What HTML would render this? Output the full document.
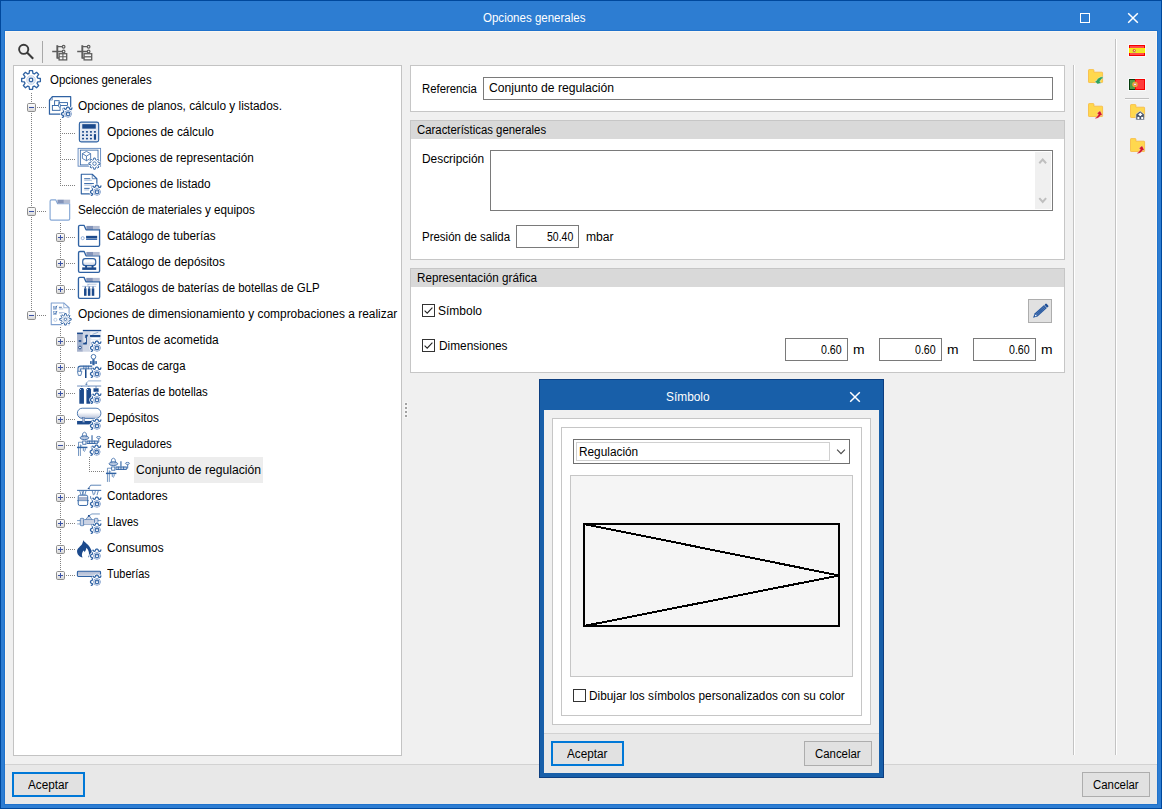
<!DOCTYPE html>
<html><head><meta charset="utf-8"><title>Opciones generales</title>
<style>
html,body{margin:0;padding:0}
body{width:1162px;height:809px;overflow:hidden;position:relative;background:#f0f0f0;font-family:"Liberation Sans",sans-serif;}
.t{position:absolute;white-space:nowrap;line-height:14px;height:14px;transform-origin:0 0;display:inline-block;font-family:"Liberation Sans",sans-serif;}
svg{overflow:visible}
</style></head>
<body>
<div class="" style="position:absolute;left:0px;top:0px;width:1162px;height:809px;background:#2d7dd2"></div>
<div class="" style="position:absolute;left:0px;top:0px;width:1162px;height:1px;background:#00489c"></div>
<div class="" style="position:absolute;left:0px;top:0px;width:1px;height:809px;background:#00489c"></div>
<div class="" style="position:absolute;left:1161px;top:0px;width:1px;height:809px;background:#00489c"></div>
<div class="" style="position:absolute;left:0px;top:808px;width:1162px;height:1px;background:#00489c"></div>
<div class="" style="position:absolute;left:4px;top:30px;width:1154px;height:775px;background:#1f72cc"></div>
<div class="" style="position:absolute;left:5px;top:31px;width:1152px;height:773px;background:#f0f0f0"></div>
<div class="" style="position:absolute;left:5px;top:31px;width:1152px;height:1px;background:#fbf7f1"></div>
<div class="" style="position:absolute;left:5px;top:31px;width:1px;height:773px;background:#fbf7f1"></div>
<div class="" style="position:absolute;left:1156px;top:31px;width:1px;height:773px;background:#fbf7f1"></div>
<div class="" style="position:absolute;left:5px;top:764px;width:1152px;height:40px;background:#e8e8e8"></div>
<div class="" style="position:absolute;left:5px;top:764px;width:1152px;height:1px;background:#d2d2d2"></div>
<span class="t " id="t1" style="left:482.52px;top:11px;color:#fff;font-size:12px;transform:scaleX(0.9603)">Opciones generales</span>
<div class="" style="position:absolute;left:1080px;top:13px;width:10px;height:10px;border:1px solid #fff;box-sizing:border-box"></div>
<svg style="position:absolute;left:1127px;top:12px" width="12" height="12" viewBox="0 0 12 12"><path d="M1.2 1.2 L10.8 10.8 M10.8 1.2 L1.2 10.8" stroke="#fff" stroke-width="1.5" fill="none"/></svg>
<svg style="position:absolute;left:16px;top:42px" width="20" height="20" viewBox="0 0 20 20"><circle cx="7.7" cy="7.3" r="4.6" fill="none" stroke="#3a3a3a" stroke-width="1.9"/><path d="M11 10.6 L17.2 16.8" stroke="#3a3a3a" stroke-width="2.1"/></svg>
<div class="" style="position:absolute;left:42px;top:41px;width:1px;height:22px;background:#a8a8a8"></div>
<svg style="position:absolute;left:51px;top:44px" width="17" height="17" viewBox="0 0 17 17"><path d="M6.3 1.2 V14.6" stroke="#5d5d5d" stroke-width="1.9"/><path d="M1.2 7.5 H6.3" stroke="#5d5d5d" stroke-width="1.5"/><path d="M6.3 2.6 H11.6 M6.3 7.5 H11.6 M6.3 14 H8.6" stroke="#5d5d5d" stroke-width="1.3"/><circle cx="12.6" cy="2.7" r="1.35" fill="#f0f0f0" stroke="#5d5d5d" stroke-width="1.2"/><circle cx="12.6" cy="7.5" r="1.35" fill="#f0f0f0" stroke="#5d5d5d" stroke-width="1.2"/><rect x="8.1" y="9.7" width="7.6" height="6.2" fill="#f6f6f6" stroke="#5d5d5d" stroke-width="1.3"/><path d="M11.9 9.7 V15.9 M8.1 12.8 H15.7" stroke="#5d5d5d" stroke-width="1.1"/></svg>
<svg style="position:absolute;left:76px;top:44px" width="17" height="17" viewBox="0 0 17 17"><path d="M6.3 1.2 V14.6" stroke="#5d5d5d" stroke-width="1.9"/><path d="M1.2 7.5 H6.3" stroke="#5d5d5d" stroke-width="1.5"/><path d="M6.3 2.6 H11.6 M6.3 7.5 H11.6 M6.3 14 H8.6" stroke="#5d5d5d" stroke-width="1.3"/><circle cx="12.6" cy="2.7" r="1.35" fill="#f0f0f0" stroke="#5d5d5d" stroke-width="1.2"/><circle cx="12.6" cy="7.5" r="1.35" fill="#f0f0f0" stroke="#5d5d5d" stroke-width="1.2"/><rect x="8.1" y="9.7" width="7.6" height="6.2" fill="#f6f6f6" stroke="#5d5d5d" stroke-width="1.3"/><path d="M8.1 12.8 H15.7" stroke="#5d5d5d" stroke-width="1.3"/></svg>
<div class="" style="position:absolute;left:13px;top:65px;width:389px;height:691px;background:#fff;border:1px solid #c3c3c3;box-sizing:border-box"></div>
<div class="" style="position:absolute;left:31px;top:93px;width:1px;height:222px;background:repeating-linear-gradient(to bottom,#808080 0 1px,transparent 1px 2px)"></div>
<div class="" style="position:absolute;left:60px;top:119px;width:1px;height:67px;background:repeating-linear-gradient(to bottom,#808080 0 1px,transparent 1px 2px)"></div>
<div class="" style="position:absolute;left:60px;top:223px;width:1px;height:66px;background:repeating-linear-gradient(to bottom,#808080 0 1px,transparent 1px 2px)"></div>
<div class="" style="position:absolute;left:60px;top:327px;width:1px;height:248px;background:repeating-linear-gradient(to bottom,#808080 0 1px,transparent 1px 2px)"></div>
<div class="" style="position:absolute;left:89px;top:457px;width:1px;height:15px;background:repeating-linear-gradient(to bottom,#808080 0 1px,transparent 1px 2px)"></div>
<svg style="position:absolute;left:10px;top:60px;overflow:visible" width="1" height="1"><g transform="scale(0.099828)"><path d="M276.7 181.1 L304.3 185.4 L304.3 215.6 L276.7 219.9 L271.0 233.6 L287.5 256.2 L266.2 277.5 L243.6 261.0 L229.9 266.7 L225.6 294.3 L195.4 294.3 L191.1 266.7 L177.4 261.0 L154.8 277.5 L133.5 256.2 L150.0 233.6 L144.3 219.9 L116.7 215.6 L116.7 185.4 L144.3 181.1 L150.0 167.4 L133.5 144.8 L154.8 123.5 L177.4 140.0 L191.1 134.3 L195.4 106.7 L225.6 106.7 L229.9 134.3 L243.6 140.0 L266.2 123.5 L287.5 144.8 L271.0 167.4Z" fill="#fff" stroke="#2f62a3" stroke-width="13" stroke-linejoin="round" /><circle cx="210.5" cy="200.5" r="43" fill="none" stroke="#9fb6d8" stroke-width="6"/><circle cx="210.5" cy="200.5" r="32" fill="none" stroke="#b9cae4" stroke-width="6"/><circle cx="210.5" cy="200.5" r="18" fill="none" stroke="#2f62a3" stroke-width="13"/></g></svg>
<span class="t " id="t2" style="left:49.83px;top:73px;color:#000;font-size:12px;transform:scaleX(0.9528)">Opciones generales</span>
<div class="" style="position:absolute;left:37px;top:107px;width:9px;height:1px;background:repeating-linear-gradient(to right,#808080 0 1px,transparent 1px 2px)"></div>
<svg style="position:absolute;left:44px;top:92px;overflow:visible" width="1" height="1"><g transform="scale(0.064309)"><path d="M85 125 L130 72 H415 V345 H85 Z" fill="#fff" stroke="#2f62a3" stroke-width="19" stroke-linejoin="round" /><path d="M85 125 H130 V72" fill="none" stroke="#2f62a3" stroke-width="9" stroke-linejoin="round" /><rect x="165" y="135" width="70" height="75" rx="0" fill="none" stroke="#2f62a3" stroke-width="14"/><rect x="130" y="210" width="120" height="75" rx="0" fill="#fff" stroke="#2f62a3" stroke-width="14"/><rect x="235" y="165" width="130" height="45" rx="0" fill="#fff" stroke="#2f62a3" stroke-width="14"/><rect x="225" y="185" width="30" height="50" rx="14" fill="#fff" stroke="#2f62a3" stroke-width="11"/></g></svg><svg style="position:absolute;left:0;top:0;overflow:visible" width="1" height="1"><circle cx="68.1" cy="113.9" r="4.6" fill="#fff"/><path d="M71.95 107.80 C71.91 107.98 71.86 108.64 71.70 108.90 C71.54 109.16 71.27 109.28 71.00 109.35 C70.73 109.42 70.35 109.41 70.10 109.30 C69.85 109.19 69.65 108.97 69.50 108.70 C69.35 108.43 69.35 107.96 69.20 107.70 C69.05 107.44 68.88 107.25 68.60 107.15 C68.32 107.05 67.80 107.04 67.50 107.10 C67.20 107.16 66.97 107.28 66.80 107.50 C66.63 107.72 66.63 108.13 66.50 108.40 C66.37 108.67 66.20 108.95 66.00 109.10 C65.80 109.25 65.52 109.32 65.30 109.30 C65.08 109.28 64.87 109.18 64.70 109.00 C64.53 108.82 64.37 108.33 64.30 108.20" fill="none" stroke="#fff" stroke-width="2.6" stroke-linecap="round"/><path d="M63.65 111.00 C63.59 111.20 63.61 111.91 63.31 112.23 C63.01 112.55 62.14 112.59 61.86 112.90 C61.57 113.22 61.56 113.75 61.60 114.12 C61.64 114.49 61.79 114.86 62.09 115.12 C62.39 115.38 63.15 115.43 63.42 115.68 C63.69 115.93 63.86 116.36 63.69 116.64 C63.52 116.92 62.63 117.23 62.42 117.35" fill="none" stroke="#fff" stroke-width="2.6" stroke-linecap="round"/><path d="M71.95 107.80 L71.70 108.90 L71.00 109.35 L70.10 109.30 L69.50 108.70 L69.20 107.70 L68.60 107.15 L67.50 107.10 L66.80 107.50 L66.50 108.40 L66.00 109.10 L65.30 109.30 L64.70 109.00 L64.30 108.20" fill="none" stroke="#2f62a3" stroke-width="1.25" stroke-linecap="round" stroke-linejoin="round"/><path d="M64.30 108.20 C64.15 108.19 63.70 108.02 63.40 108.15 C63.10 108.28 62.58 108.67 62.50 109.00 C62.42 109.33 62.71 109.77 62.90 110.10 C63.09 110.43 63.52 110.85 63.65 111.00" fill="none" stroke="#2f62a3" stroke-opacity="0.45" stroke-width="1.1" stroke-linecap="round"/><path d="M63.65 111.00 C63.59 111.20 63.61 111.91 63.31 112.23 C63.01 112.55 62.14 112.59 61.86 112.90 C61.57 113.22 61.56 113.75 61.60 114.12 C61.64 114.49 61.79 114.86 62.09 115.12 C62.39 115.38 63.15 115.43 63.42 115.68 C63.69 115.93 63.86 116.36 63.69 116.64 C63.52 116.92 62.63 117.23 62.42 117.35" fill="none" stroke="#2f62a3" stroke-width="1.25" stroke-linecap="round"/><circle cx="68.1" cy="113.9" r="3.3" fill="#e4ebf6" stroke="#7494c6" stroke-width="1.0"/><path d="M69.86 114.63 L71.15 115.16 M68.83 115.66 L69.36 116.95 M67.37 115.66 L66.84 116.95 M66.34 114.63 L65.05 115.16 M66.34 113.17 L65.05 112.64 M67.37 112.14 L66.84 110.85 M68.83 112.14 L69.36 110.85 M69.86 113.17 L71.15 112.64 " stroke="#fff" stroke-width="0.7"/><circle cx="68.1" cy="113.9" r="1.8" fill="#eef2f9" stroke="#2f62a3" stroke-width="1.05"/><circle cx="68.1" cy="113.5" r="0.6" fill="#86a3cf"/></svg>
<span class="t " id="t3" style="left:77.96px;top:99px;color:#000;font-size:12px;transform:scaleX(0.9862)">Opciones de planos, cálculo y listados.</span>
<div class="" style="position:absolute;left:62px;top:133px;width:13px;height:1px;background:repeating-linear-gradient(to right,#808080 0 1px,transparent 1px 2px)"></div>
<svg style="position:absolute;left:44px;top:92px;overflow:visible" width="1" height="1"><g transform="scale(0.064309)"><rect x="550" y="468" width="300" height="307" rx="28" fill="#e3e9f3" stroke="#2f62a3" stroke-width="18"/><rect x="595" y="500" width="210" height="70" rx="0" fill="#1c4a8c" stroke="none" stroke-width="0"/><rect x="591" y="606" width="32" height="28" rx="11" fill="#1c4a8c" stroke="none" stroke-width="0"/><rect x="652" y="606" width="32" height="28" rx="11" fill="#1c4a8c" stroke="none" stroke-width="0"/><rect x="714" y="606" width="32" height="28" rx="11" fill="#1c4a8c" stroke="none" stroke-width="0"/><rect x="776" y="606" width="32" height="28" rx="11" fill="#1c4a8c" stroke="none" stroke-width="0"/><rect x="591" y="658" width="32" height="28" rx="11" fill="#1c4a8c" stroke="none" stroke-width="0"/><rect x="652" y="658" width="32" height="28" rx="11" fill="#1c4a8c" stroke="none" stroke-width="0"/><rect x="714" y="658" width="32" height="28" rx="11" fill="#1c4a8c" stroke="none" stroke-width="0"/><rect x="591" y="711" width="32" height="28" rx="11" fill="#1c4a8c" stroke="none" stroke-width="0"/><rect x="652" y="711" width="32" height="28" rx="11" fill="#1c4a8c" stroke="none" stroke-width="0"/><rect x="714" y="711" width="32" height="28" rx="11" fill="#1c4a8c" stroke="none" stroke-width="0"/><rect x="776" y="655" width="33" height="87" rx="9" fill="#1c4a8c" stroke="none" stroke-width="0"/></g></svg>
<span class="t " id="t4" style="left:106.9px;top:125px;color:#000;font-size:12px;transform:scaleX(0.9891)">Opciones de cálculo</span>
<div class="" style="position:absolute;left:62px;top:159px;width:13px;height:1px;background:repeating-linear-gradient(to right,#808080 0 1px,transparent 1px 2px)"></div>
<svg style="position:absolute;left:44px;top:144px;overflow:visible" width="1" height="1"><g transform="scale(0.064309)"><rect x="530" y="68" width="350" height="277" rx="0" fill="#fff" stroke="#5f86bd" stroke-width="14"/><rect x="565" y="95" width="275" height="230" rx="0" fill="#fff" stroke="#2f62a3" stroke-width="13"/><path d="M660 115 L725 150 V225 L660 260 L597 225 V150 Z M597 150 L660 188 L725 150 M660 188 V260" fill="none" stroke="#2f62a3" stroke-width="12" stroke-linejoin="round" /><circle cx="785" cy="305" r="96" fill="#fff" stroke="none" stroke-width="0"/><path d="M845.1 289.9 L872.2 292.9 L872.2 317.1 L845.1 320.1 L838.2 336.9 L855.2 358.1 L838.1 375.2 L816.9 358.2 L800.1 365.1 L797.1 392.2 L772.9 392.2 L769.9 365.1 L753.1 358.2 L731.9 375.2 L714.8 358.1 L731.8 336.9 L724.9 320.1 L697.8 317.1 L697.8 292.9 L724.9 289.9 L731.8 273.1 L714.8 251.9 L731.9 234.8 L753.1 251.8 L769.9 244.9 L772.9 217.8 L797.1 217.8 L800.1 244.9 L816.9 251.8 L838.1 234.8 L855.2 251.9 L838.2 273.1Z" fill="#fff" stroke="#2f62a3" stroke-width="14" stroke-linejoin="round" /><circle cx="785" cy="305" r="27" fill="none" stroke="#2f62a3" stroke-width="13"/></g></svg>
<span class="t " id="t5" style="left:106.9px;top:151px;color:#000;font-size:12px;transform:scaleX(0.9773)">Opciones de representación</span>
<div class="" style="position:absolute;left:62px;top:185px;width:13px;height:1px;background:repeating-linear-gradient(to right,#808080 0 1px,transparent 1px 2px)"></div>
<svg style="position:absolute;left:44px;top:144px;overflow:visible" width="1" height="1"><g transform="scale(0.064309)"><path d="M580 470 H750 L822 540 V775 H580 Z" fill="#fff" stroke="#2f62a3" stroke-width="18" stroke-linejoin="round" /><path d="M750 470 V540 H822" fill="none" stroke="#2f62a3" stroke-width="11" stroke-linejoin="round" /><path d="M625 540 H720 M625 615 H775 M625 690 H710" fill="none" stroke="#2f62a3" stroke-width="15" stroke-linejoin="round" /><path d="M625 565 H745 M625 640 H745 M625 715 H700" fill="none" stroke="#9db6d8" stroke-width="13" stroke-linejoin="round" /></g></svg><svg style="position:absolute;left:0;top:0;overflow:visible" width="1" height="1"><circle cx="97.05" cy="191.9" r="4.6" fill="#fff"/><path d="M100.90 185.80 C100.86 185.98 100.81 186.64 100.65 186.90 C100.49 187.16 100.22 187.28 99.95 187.35 C99.68 187.42 99.30 187.41 99.05 187.30 C98.80 187.19 98.60 186.97 98.45 186.70 C98.30 186.43 98.30 185.96 98.15 185.70 C98.00 185.44 97.83 185.25 97.55 185.15 C97.27 185.05 96.75 185.04 96.45 185.10 C96.15 185.16 95.92 185.28 95.75 185.50 C95.58 185.72 95.58 186.13 95.45 186.40 C95.32 186.67 95.15 186.95 94.95 187.10 C94.75 187.25 94.47 187.32 94.25 187.30 C94.03 187.28 93.82 187.18 93.65 187.00 C93.48 186.82 93.32 186.33 93.25 186.20" fill="none" stroke="#fff" stroke-width="2.6" stroke-linecap="round"/><path d="M92.60 189.00 C92.54 189.21 92.56 189.91 92.26 190.23 C91.96 190.55 91.09 190.59 90.81 190.90 C90.53 191.22 90.51 191.75 90.55 192.12 C90.59 192.49 90.74 192.86 91.04 193.12 C91.34 193.38 92.10 193.43 92.37 193.68 C92.64 193.93 92.81 194.36 92.64 194.64 C92.47 194.92 91.58 195.23 91.37 195.35" fill="none" stroke="#fff" stroke-width="2.6" stroke-linecap="round"/><path d="M100.90 185.80 L100.65 186.90 L99.95 187.35 L99.05 187.30 L98.45 186.70 L98.15 185.70 L97.55 185.15 L96.45 185.10 L95.75 185.50 L95.45 186.40 L94.95 187.10 L94.25 187.30 L93.65 187.00 L93.25 186.20" fill="none" stroke="#2f62a3" stroke-width="1.25" stroke-linecap="round" stroke-linejoin="round"/><path d="M93.25 186.20 C93.10 186.19 92.65 186.02 92.35 186.15 C92.05 186.28 91.53 186.68 91.45 187.00 C91.37 187.32 91.66 187.77 91.85 188.10 C92.04 188.43 92.47 188.85 92.60 189.00" fill="none" stroke="#2f62a3" stroke-opacity="0.45" stroke-width="1.1" stroke-linecap="round"/><path d="M92.60 189.00 C92.54 189.21 92.56 189.91 92.26 190.23 C91.96 190.55 91.09 190.59 90.81 190.90 C90.53 191.22 90.51 191.75 90.55 192.12 C90.59 192.49 90.74 192.86 91.04 193.12 C91.34 193.38 92.10 193.43 92.37 193.68 C92.64 193.93 92.81 194.36 92.64 194.64 C92.47 194.92 91.58 195.23 91.37 195.35" fill="none" stroke="#2f62a3" stroke-width="1.25" stroke-linecap="round"/><circle cx="97.05" cy="191.9" r="3.3" fill="#e4ebf6" stroke="#7494c6" stroke-width="1.0"/><path d="M98.81 192.63 L100.10 193.16 M97.78 193.66 L98.31 194.95 M96.32 193.66 L95.79 194.95 M95.29 192.63 L94.00 193.16 M95.29 191.17 L94.00 190.64 M96.32 190.14 L95.79 188.85 M97.78 190.14 L98.31 188.85 M98.81 191.17 L100.10 190.64 " stroke="#fff" stroke-width="0.7"/><circle cx="97.05" cy="191.9" r="1.8" fill="#eef2f9" stroke="#2f62a3" stroke-width="1.05"/><circle cx="97.05" cy="191.5" r="0.6" fill="#86a3cf"/></svg>
<span class="t " id="t6" style="left:106.9px;top:177px;color:#000;font-size:12px;transform:scaleX(0.9831)">Opciones de listado</span>
<div class="" style="position:absolute;left:37px;top:211px;width:9px;height:1px;background:repeating-linear-gradient(to right,#808080 0 1px,transparent 1px 2px)"></div>
<svg style="position:absolute;left:20px;top:196px;overflow:visible" width="1" height="1"><g transform="scale(0.096463)"><path d="M312 54 Q312 40 326 40 H370 L390 80 H515 V236 Q515 250 501 250 H326 Q312 250 312 236 Z" fill="#fff" stroke="#86a8d6" stroke-width="12" stroke-linejoin="round" /><rect x="388" y="38" width="67" height="38" rx="0" fill="#8394ba" stroke="none" stroke-width="0"/><rect x="455" y="38" width="65" height="38" rx="0" fill="#b3bcd2" stroke="none" stroke-width="0"/></g></svg>
<span class="t " id="t7" style="left:77.96px;top:203px;color:#000;font-size:12px;transform:scaleX(0.9710)">Selección de materiales y equipos</span>
<div class="" style="position:absolute;left:66px;top:237px;width:9px;height:1px;background:repeating-linear-gradient(to right,#808080 0 1px,transparent 1px 2px)"></div>
<svg style="position:absolute;left:20px;top:196px;overflow:visible" width="1" height="1"><g transform="scale(0.096463)"><path d="M607 319 Q607 305 621 305 H665 L685 350 H825 V508 Q825 522 811 522 H621 Q607 522 607 508 Z" fill="#fff" stroke="#2f62a3" stroke-width="14" stroke-linejoin="round" /><rect x="688" y="310" width="69" height="36" rx="0" fill="#8394ba" stroke="none" stroke-width="0"/><rect x="757" y="310" width="69" height="36" rx="0" fill="#b3bcd2" stroke="none" stroke-width="0"/><circle cx="650" cy="437" r="16" fill="#fff" stroke="#7d9fd0" stroke-width="8"/><rect x="685" y="413" width="115" height="28" rx="0" fill="#1c4a8c" stroke="none" stroke-width="0"/><rect x="685" y="444" width="115" height="12" rx="0" fill="#3f6db0" stroke="none" stroke-width="0"/></g></svg>
<span class="t " id="t8" style="left:106.91px;top:229px;color:#000;font-size:12px;transform:scaleX(0.9745)">Catálogo de tuberías</span>
<div class="" style="position:absolute;left:66px;top:263px;width:9px;height:1px;background:repeating-linear-gradient(to right,#808080 0 1px,transparent 1px 2px)"></div>
<svg style="position:absolute;left:20px;top:196px;overflow:visible" width="1" height="1"><g transform="scale(0.096463)"><path d="M607 589 Q607 575 621 575 H665 L685 620 H825 V778 Q825 792 811 792 H621 Q607 792 607 778 Z" fill="#fff" stroke="#2f62a3" stroke-width="14" stroke-linejoin="round" /><rect x="688" y="580" width="69" height="36" rx="0" fill="#8394ba" stroke="none" stroke-width="0"/><rect x="757" y="580" width="69" height="36" rx="0" fill="#b3bcd2" stroke="none" stroke-width="0"/><defs><linearGradient id="tg1" x1="0" y1="0" x2="0" y2="1"><stop offset="0.4" stop-color="#fff"/><stop offset="1" stop-color="#c3ccdf"/></linearGradient></defs><rect x="650" y="650" width="135" height="72" rx="28" fill="url(#tg1)" stroke="#2f62a3" stroke-width="12"/><rect x="675" y="720" width="20" height="25" rx="0" fill="#1c4a8c" stroke="none" stroke-width="0"/><rect x="742" y="720" width="20" height="25" rx="0" fill="#1c4a8c" stroke="none" stroke-width="0"/><rect x="645" y="740" width="145" height="26" rx="0" fill="#1c4a8c" stroke="none" stroke-width="0"/></g></svg>
<span class="t " id="t9" style="left:106.91px;top:255px;color:#000;font-size:12px;transform:scaleX(0.9869)">Catálogo de depósitos</span>
<div class="" style="position:absolute;left:66px;top:289px;width:9px;height:1px;background:repeating-linear-gradient(to right,#808080 0 1px,transparent 1px 2px)"></div>
<svg style="position:absolute;left:44px;top:274px;overflow:visible" width="1" height="1"><g transform="scale(0.096463)"><path d="M357 49 Q357 35 371 35 H415 L435 80 H577 V238 Q577 252 563 252 H371 Q357 252 357 238 Z" fill="#fff" stroke="#2f62a3" stroke-width="14" stroke-linejoin="round" /><rect x="438" y="40" width="69" height="36" rx="0" fill="#8394ba" stroke="none" stroke-width="0"/><rect x="507" y="40" width="71" height="36" rx="0" fill="#b3bcd2" stroke="none" stroke-width="0"/><path d="M395 128 H540 M445 106 H545" fill="none" stroke="#8aa5cf" stroke-width="6" stroke-linejoin="round" /><path d="M455 128 L455 112 L470 106" fill="none" stroke="#8aa5cf" stroke-width="5" stroke-linejoin="round" /><rect x="415" y="150" width="26" height="76" rx="0" fill="#1c4a8c" stroke="none" stroke-width="0"/><rect x="422" y="130" width="12" height="22" rx="0" fill="#1c4a8c" stroke="none" stroke-width="0"/><rect x="455" y="150" width="26" height="76" rx="0" fill="#1c4a8c" stroke="none" stroke-width="0"/><rect x="462" y="130" width="12" height="22" rx="0" fill="#1c4a8c" stroke="none" stroke-width="0"/><rect x="495" y="150" width="26" height="76" rx="0" fill="#1c4a8c" stroke="none" stroke-width="0"/><rect x="502" y="130" width="12" height="22" rx="0" fill="#1c4a8c" stroke="none" stroke-width="0"/></g></svg>
<span class="t " id="t10" style="left:106.9px;top:281px;color:#000;font-size:12px;transform:scaleX(0.9547)">Catálogos de baterías de botellas de GLP</span>
<div class="" style="position:absolute;left:37px;top:315px;width:9px;height:1px;background:repeating-linear-gradient(to right,#808080 0 1px,transparent 1px 2px)"></div>
<svg style="position:absolute;left:44px;top:274px;overflow:visible" width="1" height="1"><g transform="scale(0.096463)"><path d="M75 300 H205 L260 350 V525 H75 Z" fill="#fff" stroke="#7fa0cf" stroke-width="11" stroke-linejoin="round" /><path d="M205 300 V350 H260" fill="none" stroke="#7fa0cf" stroke-width="8" stroke-linejoin="round" /><rect x="100" y="335" width="30" height="30" rx="0" fill="none" stroke="#7fa0cf" stroke-width="7"/><rect x="100" y="390" width="30" height="30" rx="0" fill="none" stroke="#7fa0cf" stroke-width="7"/><path d="M104 345 L115 360 L135 328 M104 400 L115 415 L135 383" fill="none" stroke="#2f62a3" stroke-width="8" stroke-linejoin="round" /><circle cx="118" cy="475" r="16" fill="none" stroke="#a9bfdd" stroke-width="8"/><path d="M155 345 H185" fill="none" stroke="#2f62a3" stroke-width="9" stroke-linejoin="round" /><path d="M155 362 H200" fill="none" stroke="#9db6d8" stroke-width="9" stroke-linejoin="round" /><path d="M155 402 H215" fill="none" stroke="#b5c6e0" stroke-width="16" stroke-linejoin="round" /><circle cx="222" cy="470" r="70" fill="#fff" stroke="none" stroke-width="0"/><path d="M262.7 459.8 L281.4 461.8 L281.4 478.2 L262.7 480.2 L258.0 491.6 L269.8 506.2 L258.2 517.8 L243.6 506.0 L232.2 510.7 L230.2 529.4 L213.8 529.4 L211.8 510.7 L200.4 506.0 L185.8 517.8 L174.2 506.2 L186.0 491.6 L181.3 480.2 L162.6 478.2 L162.6 461.8 L181.3 459.8 L186.0 448.4 L174.2 433.8 L185.8 422.2 L200.4 434.0 L211.8 429.3 L213.8 410.6 L230.2 410.6 L232.2 429.3 L243.6 434.0 L258.2 422.2 L269.8 433.8 L258.0 448.4Z" fill="#fff" stroke="#2f62a3" stroke-width="10" stroke-linejoin="round" /><circle cx="222" cy="470" r="27" fill="none" stroke="#9db6d8" stroke-width="6"/><circle cx="222" cy="470" r="13" fill="none" stroke="#2f62a3" stroke-width="9"/></g></svg>
<span class="t " id="t11" style="left:77.97px;top:307px;color:#000;font-size:12px;transform:scaleX(0.9930)">Opciones de dimensionamiento y comprobaciones a realizar</span>
<div class="" style="position:absolute;left:66px;top:341px;width:9px;height:1px;background:repeating-linear-gradient(to right,#808080 0 1px,transparent 1px 2px)"></div>
<svg style="position:absolute;left:70px;top:326px;overflow:visible" width="1" height="1"><g transform="scale(0.064309)"><rect x="110" y="105" width="90" height="295" rx="0" fill="#a3afca" stroke="none" stroke-width="0"/><rect x="200" y="65" width="120" height="335" rx="0" fill="#cfd6e5" stroke="none" stroke-width="0"/><rect x="320" y="65" width="165" height="150" rx="0" fill="#e9edf4" stroke="none" stroke-width="0"/><rect x="110" y="103" width="90" height="23" rx="0" fill="#1c4a8c" stroke="none" stroke-width="0"/><rect x="200" y="60" width="285" height="20" rx="0" fill="#1c4a8c" stroke="none" stroke-width="0"/><path d="M205 275 H250 V150 H278" fill="none" stroke="#1c4a8c" stroke-width="26" stroke-linejoin="round" /><rect x="228" y="188" width="18" height="62" rx="0" fill="#fff" stroke="none" stroke-width="0"/><rect x="135" y="220" width="40" height="26" rx="0" fill="#1c4a8c" stroke="none" stroke-width="0"/><rect x="130" y="265" width="70" height="27" rx="0" fill="#9db6d8" stroke="none" stroke-width="0"/><circle cx="155" cy="335" r="21" fill="#fff" stroke="#1c4a8c" stroke-width="15"/><rect x="312" y="140" width="160" height="32" rx="0" fill="#1c4a8c" stroke="none" stroke-width="0"/><path d="M350 130 L440 96" fill="none" stroke="#2f62a3" stroke-width="7" stroke-linejoin="round" /><rect x="325" y="178" width="140" height="36" rx="10" fill="#fff" stroke="#a9bfdd" stroke-width="6"/></g></svg><svg style="position:absolute;left:0;top:0;overflow:visible" width="1" height="1"><circle cx="97.0" cy="347.9" r="4.6" fill="#fff"/><path d="M100.85 341.80 C100.81 341.98 100.76 342.64 100.60 342.90 C100.44 343.16 100.17 343.28 99.90 343.35 C99.63 343.42 99.25 343.41 99.00 343.30 C98.75 343.19 98.55 342.97 98.40 342.70 C98.25 342.43 98.25 341.96 98.10 341.70 C97.95 341.44 97.78 341.25 97.50 341.15 C97.22 341.05 96.70 341.04 96.40 341.10 C96.10 341.16 95.87 341.28 95.70 341.50 C95.53 341.72 95.53 342.13 95.40 342.40 C95.27 342.67 95.10 342.95 94.90 343.10 C94.70 343.25 94.42 343.32 94.20 343.30 C93.98 343.28 93.77 343.18 93.60 343.00 C93.43 342.82 93.27 342.33 93.20 342.20" fill="none" stroke="#fff" stroke-width="2.6" stroke-linecap="round"/><path d="M92.55 345.00 C92.49 345.20 92.51 345.91 92.21 346.23 C91.91 346.55 91.05 346.58 90.76 346.90 C90.48 347.21 90.46 347.75 90.50 348.12 C90.54 348.49 90.69 348.86 90.99 349.12 C91.29 349.38 92.05 349.43 92.32 349.68 C92.59 349.93 92.76 350.36 92.59 350.64 C92.42 350.92 91.53 351.23 91.32 351.35" fill="none" stroke="#fff" stroke-width="2.6" stroke-linecap="round"/><path d="M100.85 341.80 L100.60 342.90 L99.90 343.35 L99.00 343.30 L98.40 342.70 L98.10 341.70 L97.50 341.15 L96.40 341.10 L95.70 341.50 L95.40 342.40 L94.90 343.10 L94.20 343.30 L93.60 343.00 L93.20 342.20" fill="none" stroke="#2f62a3" stroke-width="1.25" stroke-linecap="round" stroke-linejoin="round"/><path d="M93.20 342.20 C93.05 342.19 92.60 342.02 92.30 342.15 C92.00 342.28 91.48 342.68 91.40 343.00 C91.32 343.32 91.61 343.77 91.80 344.10 C91.99 344.43 92.42 344.85 92.55 345.00" fill="none" stroke="#2f62a3" stroke-opacity="0.45" stroke-width="1.1" stroke-linecap="round"/><path d="M92.55 345.00 C92.49 345.20 92.51 345.91 92.21 346.23 C91.91 346.55 91.05 346.58 90.76 346.90 C90.48 347.21 90.46 347.75 90.50 348.12 C90.54 348.49 90.69 348.86 90.99 349.12 C91.29 349.38 92.05 349.43 92.32 349.68 C92.59 349.93 92.76 350.36 92.59 350.64 C92.42 350.92 91.53 351.23 91.32 351.35" fill="none" stroke="#2f62a3" stroke-width="1.25" stroke-linecap="round"/><circle cx="97.0" cy="347.9" r="3.3" fill="#e4ebf6" stroke="#7494c6" stroke-width="1.0"/><path d="M98.76 348.63 L100.05 349.16 M97.73 349.66 L98.26 350.95 M96.27 349.66 L95.74 350.95 M95.24 348.63 L93.95 349.16 M95.24 347.17 L93.95 346.64 M96.27 346.14 L95.74 344.85 M97.73 346.14 L98.26 344.85 M98.76 347.17 L100.05 346.64 " stroke="#fff" stroke-width="0.7"/><circle cx="97.0" cy="347.9" r="1.8" fill="#eef2f9" stroke="#2f62a3" stroke-width="1.05"/><circle cx="97.0" cy="347.5" r="0.6" fill="#86a3cf"/></svg>
<span class="t " id="t12" style="left:106.98px;top:333px;color:#000;font-size:12px;transform:scaleX(0.9909)">Puntos de acometida</span>
<div class="" style="position:absolute;left:66px;top:367px;width:9px;height:1px;background:repeating-linear-gradient(to right,#808080 0 1px,transparent 1px 2px)"></div>
<svg style="position:absolute;left:70px;top:326px;overflow:visible" width="1" height="1"><g transform="scale(0.064309)"><circle cx="365" cy="478" r="36" fill="#fff" stroke="#2f62a3" stroke-width="13"/><path d="M365 515 V610" fill="none" stroke="#2f62a3" stroke-width="34" stroke-linejoin="round" /><path d="M312 568 H418" fill="none" stroke="#2f62a3" stroke-width="44" stroke-linejoin="round" /><path d="M340 545 V590 M390 545 V590" fill="none" stroke="#dfe5f0" stroke-width="9" stroke-linejoin="round" /><path d="M145 700 V660 Q145 645 165 645 H345" fill="none" stroke="#2f62a3" stroke-width="58" stroke-linejoin="round" /><path d="M145 700 V662 Q145 648 165 648 H340" fill="none" stroke="#dfe5f0" stroke-width="28" stroke-linejoin="round" /><path d="M215 618 V672 M250 618 V672 M285 618 V672" fill="none" stroke="#2f62a3" stroke-width="13" stroke-linejoin="round" /><path d="M115 705 H185 L170 768 H130 Z" fill="#fff" stroke="#2f62a3" stroke-width="12" stroke-linejoin="round" /><path d="M245 672 V809" fill="none" stroke="#1c4a8c" stroke-width="24" stroke-linejoin="round" /></g></svg><svg style="position:absolute;left:0;top:0;overflow:visible" width="1" height="1"><circle cx="97.0" cy="373.9" r="4.6" fill="#fff"/><path d="M100.85 367.80 C100.81 367.98 100.76 368.64 100.60 368.90 C100.44 369.16 100.17 369.28 99.90 369.35 C99.63 369.42 99.25 369.41 99.00 369.30 C98.75 369.19 98.55 368.97 98.40 368.70 C98.25 368.43 98.25 367.96 98.10 367.70 C97.95 367.44 97.78 367.25 97.50 367.15 C97.22 367.05 96.70 367.04 96.40 367.10 C96.10 367.16 95.87 367.28 95.70 367.50 C95.53 367.72 95.53 368.13 95.40 368.40 C95.27 368.67 95.10 368.95 94.90 369.10 C94.70 369.25 94.42 369.32 94.20 369.30 C93.98 369.28 93.77 369.18 93.60 369.00 C93.43 368.82 93.27 368.33 93.20 368.20" fill="none" stroke="#fff" stroke-width="2.6" stroke-linecap="round"/><path d="M92.55 371.00 C92.49 371.20 92.51 371.91 92.21 372.23 C91.91 372.55 91.05 372.58 90.76 372.90 C90.48 373.21 90.46 373.75 90.50 374.12 C90.54 374.49 90.69 374.86 90.99 375.12 C91.29 375.38 92.05 375.43 92.32 375.68 C92.59 375.93 92.76 376.36 92.59 376.64 C92.42 376.92 91.53 377.23 91.32 377.35" fill="none" stroke="#fff" stroke-width="2.6" stroke-linecap="round"/><path d="M100.85 367.80 L100.60 368.90 L99.90 369.35 L99.00 369.30 L98.40 368.70 L98.10 367.70 L97.50 367.15 L96.40 367.10 L95.70 367.50 L95.40 368.40 L94.90 369.10 L94.20 369.30 L93.60 369.00 L93.20 368.20" fill="none" stroke="#2f62a3" stroke-width="1.25" stroke-linecap="round" stroke-linejoin="round"/><path d="M93.20 368.20 C93.05 368.19 92.60 368.02 92.30 368.15 C92.00 368.28 91.48 368.68 91.40 369.00 C91.32 369.32 91.61 369.77 91.80 370.10 C91.99 370.43 92.42 370.85 92.55 371.00" fill="none" stroke="#2f62a3" stroke-opacity="0.45" stroke-width="1.1" stroke-linecap="round"/><path d="M92.55 371.00 C92.49 371.20 92.51 371.91 92.21 372.23 C91.91 372.55 91.05 372.58 90.76 372.90 C90.48 373.21 90.46 373.75 90.50 374.12 C90.54 374.49 90.69 374.86 90.99 375.12 C91.29 375.38 92.05 375.43 92.32 375.68 C92.59 375.93 92.76 376.36 92.59 376.64 C92.42 376.92 91.53 377.23 91.32 377.35" fill="none" stroke="#2f62a3" stroke-width="1.25" stroke-linecap="round"/><circle cx="97.0" cy="373.9" r="3.3" fill="#e4ebf6" stroke="#7494c6" stroke-width="1.0"/><path d="M98.76 374.63 L100.05 375.16 M97.73 375.66 L98.26 376.95 M96.27 375.66 L95.74 376.95 M95.24 374.63 L93.95 375.16 M95.24 373.17 L93.95 372.64 M96.27 372.14 L95.74 370.85 M97.73 372.14 L98.26 370.85 M98.76 373.17 L100.05 372.64 " stroke="#fff" stroke-width="0.7"/><circle cx="97.0" cy="373.9" r="1.8" fill="#eef2f9" stroke="#2f62a3" stroke-width="1.05"/><circle cx="97.0" cy="373.5" r="0.6" fill="#86a3cf"/></svg>
<span class="t " id="t13" style="left:107.0px;top:359px;color:#000;font-size:12px;transform:scaleX(0.9403)">Bocas de carga</span>
<div class="" style="position:absolute;left:66px;top:393px;width:9px;height:1px;background:repeating-linear-gradient(to right,#808080 0 1px,transparent 1px 2px)"></div>
<svg style="position:absolute;left:70px;top:378px;overflow:visible" width="1" height="1"><g transform="scale(0.064309)"><path d="M255 78 L290 45 H485" fill="none" stroke="#7497c8" stroke-width="11" stroke-linejoin="round" /><path d="M255 70 V112 M238 90 L255 112 L272 90" fill="none" stroke="#2f62a3" stroke-width="9" stroke-linejoin="round" /><path d="M110 125 H485" fill="none" stroke="#a9bcd9" stroke-width="26" stroke-linejoin="round" /><rect x="145" y="172" width="72" height="230" rx="6" fill="#1c4a8c" stroke="none" stroke-width="0"/><rect x="153" y="155" width="56" height="30" rx="10" fill="#1c4a8c" stroke="none" stroke-width="0"/><circle cx="162" cy="180" r="8" fill="#fff" stroke="none" stroke-width="0"/><rect x="255" y="172" width="72" height="230" rx="6" fill="#1c4a8c" stroke="none" stroke-width="0"/><rect x="263" y="155" width="56" height="30" rx="10" fill="#1c4a8c" stroke="none" stroke-width="0"/><circle cx="272" cy="180" r="8" fill="#fff" stroke="none" stroke-width="0"/><rect x="365" y="160" width="80" height="55" rx="0" fill="#1c4a8c" stroke="none" stroke-width="0"/><path d="M182 128 V140 M292 128 V140 M405 128 V160" fill="none" stroke="#2f62a3" stroke-width="10" stroke-linejoin="round" /></g></svg><svg style="position:absolute;left:0;top:0;overflow:visible" width="1" height="1"><circle cx="97.0" cy="399.9" r="4.6" fill="#fff"/><path d="M100.85 393.80 C100.81 393.98 100.76 394.64 100.60 394.90 C100.44 395.16 100.17 395.28 99.90 395.35 C99.63 395.42 99.25 395.41 99.00 395.30 C98.75 395.19 98.55 394.97 98.40 394.70 C98.25 394.43 98.25 393.96 98.10 393.70 C97.95 393.44 97.78 393.25 97.50 393.15 C97.22 393.05 96.70 393.04 96.40 393.10 C96.10 393.16 95.87 393.28 95.70 393.50 C95.53 393.72 95.53 394.13 95.40 394.40 C95.27 394.67 95.10 394.95 94.90 395.10 C94.70 395.25 94.42 395.32 94.20 395.30 C93.98 395.28 93.77 395.18 93.60 395.00 C93.43 394.82 93.27 394.33 93.20 394.20" fill="none" stroke="#fff" stroke-width="2.6" stroke-linecap="round"/><path d="M92.55 397.00 C92.49 397.20 92.51 397.91 92.21 398.23 C91.91 398.55 91.05 398.58 90.76 398.90 C90.48 399.21 90.46 399.75 90.50 400.12 C90.54 400.49 90.69 400.86 90.99 401.12 C91.29 401.38 92.05 401.43 92.32 401.68 C92.59 401.93 92.76 402.36 92.59 402.64 C92.42 402.92 91.53 403.23 91.32 403.35" fill="none" stroke="#fff" stroke-width="2.6" stroke-linecap="round"/><path d="M100.85 393.80 L100.60 394.90 L99.90 395.35 L99.00 395.30 L98.40 394.70 L98.10 393.70 L97.50 393.15 L96.40 393.10 L95.70 393.50 L95.40 394.40 L94.90 395.10 L94.20 395.30 L93.60 395.00 L93.20 394.20" fill="none" stroke="#2f62a3" stroke-width="1.25" stroke-linecap="round" stroke-linejoin="round"/><path d="M93.20 394.20 C93.05 394.19 92.60 394.02 92.30 394.15 C92.00 394.28 91.48 394.68 91.40 395.00 C91.32 395.32 91.61 395.77 91.80 396.10 C91.99 396.43 92.42 396.85 92.55 397.00" fill="none" stroke="#2f62a3" stroke-opacity="0.45" stroke-width="1.1" stroke-linecap="round"/><path d="M92.55 397.00 C92.49 397.20 92.51 397.91 92.21 398.23 C91.91 398.55 91.05 398.58 90.76 398.90 C90.48 399.21 90.46 399.75 90.50 400.12 C90.54 400.49 90.69 400.86 90.99 401.12 C91.29 401.38 92.05 401.43 92.32 401.68 C92.59 401.93 92.76 402.36 92.59 402.64 C92.42 402.92 91.53 403.23 91.32 403.35" fill="none" stroke="#2f62a3" stroke-width="1.25" stroke-linecap="round"/><circle cx="97.0" cy="399.9" r="3.3" fill="#e4ebf6" stroke="#7494c6" stroke-width="1.0"/><path d="M98.76 400.63 L100.05 401.16 M97.73 401.66 L98.26 402.95 M96.27 401.66 L95.74 402.95 M95.24 400.63 L93.95 401.16 M95.24 399.17 L93.95 398.64 M96.27 398.14 L95.74 396.85 M97.73 398.14 L98.26 396.85 M98.76 399.17 L100.05 398.64 " stroke="#fff" stroke-width="0.7"/><circle cx="97.0" cy="399.9" r="1.8" fill="#eef2f9" stroke="#2f62a3" stroke-width="1.05"/><circle cx="97.0" cy="399.5" r="0.6" fill="#86a3cf"/></svg>
<span class="t " id="t14" style="left:107.0px;top:385px;color:#000;font-size:12px;transform:scaleX(0.9500)">Baterías de botellas</span>
<div class="" style="position:absolute;left:66px;top:419px;width:9px;height:1px;background:repeating-linear-gradient(to right,#808080 0 1px,transparent 1px 2px)"></div>
<svg style="position:absolute;left:70px;top:378px;overflow:visible" width="1" height="1"><g transform="scale(0.064309)"><defs><linearGradient id="tg2" x1="0" y1="0" x2="0" y2="1"><stop offset="0.4" stop-color="#fff"/><stop offset="1" stop-color="#b7c2d9"/></linearGradient></defs><rect x="115" y="470" width="365" height="158" rx="75" fill="url(#tg2)" stroke="#2f62a3" stroke-width="13"/><rect x="110" y="668" width="225" height="54" rx="0" fill="#1c4a8c" stroke="none" stroke-width="0"/><rect x="195" y="610" width="35" height="80" rx="0" fill="#aab5cf" stroke="#2f62a3" stroke-width="6"/></g></svg><svg style="position:absolute;left:0;top:0;overflow:visible" width="1" height="1"><circle cx="97.0" cy="425.9" r="4.6" fill="#fff"/><path d="M100.85 419.80 C100.81 419.98 100.76 420.64 100.60 420.90 C100.44 421.16 100.17 421.28 99.90 421.35 C99.63 421.42 99.25 421.41 99.00 421.30 C98.75 421.19 98.55 420.97 98.40 420.70 C98.25 420.43 98.25 419.96 98.10 419.70 C97.95 419.44 97.78 419.25 97.50 419.15 C97.22 419.05 96.70 419.04 96.40 419.10 C96.10 419.16 95.87 419.28 95.70 419.50 C95.53 419.72 95.53 420.13 95.40 420.40 C95.27 420.67 95.10 420.95 94.90 421.10 C94.70 421.25 94.42 421.32 94.20 421.30 C93.98 421.28 93.77 421.18 93.60 421.00 C93.43 420.82 93.27 420.33 93.20 420.20" fill="none" stroke="#fff" stroke-width="2.6" stroke-linecap="round"/><path d="M92.55 423.00 C92.49 423.20 92.51 423.91 92.21 424.23 C91.91 424.55 91.05 424.58 90.76 424.90 C90.48 425.21 90.46 425.75 90.50 426.12 C90.54 426.49 90.69 426.86 90.99 427.12 C91.29 427.38 92.05 427.43 92.32 427.68 C92.59 427.93 92.76 428.36 92.59 428.64 C92.42 428.92 91.53 429.23 91.32 429.35" fill="none" stroke="#fff" stroke-width="2.6" stroke-linecap="round"/><path d="M100.85 419.80 L100.60 420.90 L99.90 421.35 L99.00 421.30 L98.40 420.70 L98.10 419.70 L97.50 419.15 L96.40 419.10 L95.70 419.50 L95.40 420.40 L94.90 421.10 L94.20 421.30 L93.60 421.00 L93.20 420.20" fill="none" stroke="#2f62a3" stroke-width="1.25" stroke-linecap="round" stroke-linejoin="round"/><path d="M93.20 420.20 C93.05 420.19 92.60 420.02 92.30 420.15 C92.00 420.28 91.48 420.68 91.40 421.00 C91.32 421.32 91.61 421.77 91.80 422.10 C91.99 422.43 92.42 422.85 92.55 423.00" fill="none" stroke="#2f62a3" stroke-opacity="0.45" stroke-width="1.1" stroke-linecap="round"/><path d="M92.55 423.00 C92.49 423.20 92.51 423.91 92.21 424.23 C91.91 424.55 91.05 424.58 90.76 424.90 C90.48 425.21 90.46 425.75 90.50 426.12 C90.54 426.49 90.69 426.86 90.99 427.12 C91.29 427.38 92.05 427.43 92.32 427.68 C92.59 427.93 92.76 428.36 92.59 428.64 C92.42 428.92 91.53 429.23 91.32 429.35" fill="none" stroke="#2f62a3" stroke-width="1.25" stroke-linecap="round"/><circle cx="97.0" cy="425.9" r="3.3" fill="#e4ebf6" stroke="#7494c6" stroke-width="1.0"/><path d="M98.76 426.63 L100.05 427.16 M97.73 427.66 L98.26 428.95 M96.27 427.66 L95.74 428.95 M95.24 426.63 L93.95 427.16 M95.24 425.17 L93.95 424.64 M96.27 424.14 L95.74 422.85 M97.73 424.14 L98.26 422.85 M98.76 425.17 L100.05 424.64 " stroke="#fff" stroke-width="0.7"/><circle cx="97.0" cy="425.9" r="1.8" fill="#eef2f9" stroke="#2f62a3" stroke-width="1.05"/><circle cx="97.0" cy="425.5" r="0.6" fill="#86a3cf"/></svg>
<span class="t " id="t15" style="left:106.98px;top:411px;color:#000;font-size:12px;transform:scaleX(0.9703)">Depósitos</span>
<div class="" style="position:absolute;left:66px;top:445px;width:9px;height:1px;background:repeating-linear-gradient(to right,#808080 0 1px,transparent 1px 2px)"></div>
<svg style="position:absolute;left:70px;top:430px;overflow:visible" width="1" height="1"><g transform="scale(0.074153)"><g transform="translate(0,0)"><path d="M165 82 Q165 30 195 30 Q225 30 225 82 Z" fill="#fff" stroke="#2f62a3" stroke-width="10" stroke-linejoin="round" /><ellipse cx="195" cy="105" rx="58" ry="24" fill="#c9d3e6" stroke="#2f62a3" stroke-width="12"/><path d="M150 105 H240" fill="none" stroke="#9db6d8" stroke-width="10" stroke-linejoin="round" /><rect x="172" y="148" width="43" height="44" rx="0" fill="#fff" stroke="#2f62a3" stroke-width="11"/><path d="M225 165 H375" fill="none" stroke="#2f62a3" stroke-width="46" stroke-linejoin="round" /><path d="M235 165 H365" fill="none" stroke="#dfe5f0" stroke-width="18" stroke-linejoin="round" /><path d="M262 145 V187 M297 145 V187 M332 145 V187" fill="none" stroke="#2f62a3" stroke-width="11" stroke-linejoin="round" /><path d="M297 70 V142" fill="none" stroke="#2f62a3" stroke-width="15" stroke-linejoin="round" /><path d="M372 165 H388 V112" fill="none" stroke="#2f62a3" stroke-width="12" stroke-linejoin="round" /><ellipse cx="385" cy="100" rx="27" ry="13" fill="#fff" stroke="#2f62a3" stroke-width="10"/><path d="M172 165 H115 V350 M140 195 V350" fill="none" stroke="#2f62a3" stroke-width="9" stroke-linejoin="round" /><path d="M95 235 H235" fill="none" stroke="#2f62a3" stroke-width="20" stroke-linejoin="round" /><path d="M180 245 V275 Q192 300 205 275 V245" fill="#fff" stroke="#2f62a3" stroke-width="10" stroke-linejoin="round" /><path d="M140 215 H165" fill="none" stroke="#2f62a3" stroke-width="9" stroke-linejoin="round" /></g></g></svg><svg style="position:absolute;left:0;top:0;overflow:visible" width="1" height="1"><circle cx="96.7" cy="451.9" r="4.6" fill="#fff"/><path d="M100.55 445.80 C100.51 445.98 100.46 446.64 100.30 446.90 C100.14 447.16 99.87 447.28 99.60 447.35 C99.33 447.42 98.95 447.41 98.70 447.30 C98.45 447.19 98.25 446.97 98.10 446.70 C97.95 446.43 97.95 445.96 97.80 445.70 C97.65 445.44 97.48 445.25 97.20 445.15 C96.92 445.05 96.40 445.04 96.10 445.10 C95.80 445.16 95.57 445.28 95.40 445.50 C95.23 445.72 95.23 446.13 95.10 446.40 C94.97 446.67 94.80 446.95 94.60 447.10 C94.40 447.25 94.12 447.32 93.90 447.30 C93.68 447.28 93.47 447.18 93.30 447.00 C93.13 446.82 92.97 446.33 92.90 446.20" fill="none" stroke="#fff" stroke-width="2.6" stroke-linecap="round"/><path d="M92.25 449.00 C92.19 449.20 92.21 449.91 91.91 450.23 C91.61 450.55 90.75 450.58 90.46 450.90 C90.18 451.21 90.16 451.75 90.20 452.12 C90.24 452.49 90.39 452.86 90.69 453.12 C90.99 453.38 91.75 453.43 92.02 453.68 C92.29 453.93 92.46 454.36 92.29 454.64 C92.12 454.92 91.23 455.23 91.02 455.35" fill="none" stroke="#fff" stroke-width="2.6" stroke-linecap="round"/><path d="M100.55 445.80 L100.30 446.90 L99.60 447.35 L98.70 447.30 L98.10 446.70 L97.80 445.70 L97.20 445.15 L96.10 445.10 L95.40 445.50 L95.10 446.40 L94.60 447.10 L93.90 447.30 L93.30 447.00 L92.90 446.20" fill="none" stroke="#2f62a3" stroke-width="1.25" stroke-linecap="round" stroke-linejoin="round"/><path d="M92.90 446.20 C92.75 446.19 92.30 446.02 92.00 446.15 C91.70 446.28 91.18 446.68 91.10 447.00 C91.02 447.32 91.31 447.77 91.50 448.10 C91.69 448.43 92.12 448.85 92.25 449.00" fill="none" stroke="#2f62a3" stroke-opacity="0.45" stroke-width="1.1" stroke-linecap="round"/><path d="M92.25 449.00 C92.19 449.20 92.21 449.91 91.91 450.23 C91.61 450.55 90.75 450.58 90.46 450.90 C90.18 451.21 90.16 451.75 90.20 452.12 C90.24 452.49 90.39 452.86 90.69 453.12 C90.99 453.38 91.75 453.43 92.02 453.68 C92.29 453.93 92.46 454.36 92.29 454.64 C92.12 454.92 91.23 455.23 91.02 455.35" fill="none" stroke="#2f62a3" stroke-width="1.25" stroke-linecap="round"/><circle cx="96.7" cy="451.9" r="3.3" fill="#e4ebf6" stroke="#7494c6" stroke-width="1.0"/><path d="M98.46 452.63 L99.75 453.16 M97.43 453.66 L97.96 454.95 M95.97 453.66 L95.44 454.95 M94.94 452.63 L93.65 453.16 M94.94 451.17 L93.65 450.64 M95.97 450.14 L95.44 448.85 M97.43 450.14 L97.96 448.85 M98.46 451.17 L99.75 450.64 " stroke="#fff" stroke-width="0.7"/><circle cx="96.7" cy="451.9" r="1.8" fill="#eef2f9" stroke="#2f62a3" stroke-width="1.05"/><circle cx="96.7" cy="451.5" r="0.6" fill="#86a3cf"/></svg>
<span class="t " id="t16" style="left:106.99px;top:437px;color:#000;font-size:12px;transform:scaleX(0.9519)">Reguladores</span>
<div class="" style="position:absolute;left:91px;top:471px;width:13px;height:1px;background:repeating-linear-gradient(to right,#808080 0 1px,transparent 1px 2px)"></div>
<div class="" style="position:absolute;left:134px;top:457px;width:129px;height:26px;background:#ededed"></div>
<svg style="position:absolute;left:70px;top:430px;overflow:visible" width="1" height="1"><g transform="scale(0.074153)"><g transform="translate(390,350)"><path d="M165 82 Q165 30 195 30 Q225 30 225 82 Z" fill="#fff" stroke="#2f62a3" stroke-width="10" stroke-linejoin="round" /><ellipse cx="195" cy="105" rx="58" ry="24" fill="#c9d3e6" stroke="#2f62a3" stroke-width="12"/><path d="M150 105 H240" fill="none" stroke="#9db6d8" stroke-width="10" stroke-linejoin="round" /><rect x="172" y="148" width="43" height="44" rx="0" fill="#fff" stroke="#2f62a3" stroke-width="11"/><path d="M225 165 H375" fill="none" stroke="#2f62a3" stroke-width="46" stroke-linejoin="round" /><path d="M235 165 H365" fill="none" stroke="#dfe5f0" stroke-width="18" stroke-linejoin="round" /><path d="M262 145 V187 M297 145 V187 M332 145 V187" fill="none" stroke="#2f62a3" stroke-width="11" stroke-linejoin="round" /><path d="M297 70 V142" fill="none" stroke="#2f62a3" stroke-width="15" stroke-linejoin="round" /><path d="M372 165 H388 V112" fill="none" stroke="#2f62a3" stroke-width="12" stroke-linejoin="round" /><ellipse cx="385" cy="100" rx="27" ry="13" fill="#fff" stroke="#2f62a3" stroke-width="10"/><path d="M172 165 H115 V350 M140 195 V350" fill="none" stroke="#2f62a3" stroke-width="9" stroke-linejoin="round" /><path d="M95 235 H235" fill="none" stroke="#2f62a3" stroke-width="20" stroke-linejoin="round" /><path d="M180 245 V275 Q192 300 205 275 V245" fill="#fff" stroke="#2f62a3" stroke-width="10" stroke-linejoin="round" /><path d="M140 215 H165" fill="none" stroke="#2f62a3" stroke-width="9" stroke-linejoin="round" /></g></g></svg>
<span class="t " id="t17" style="left:135.91px;top:463px;color:#000;font-size:12px;transform:scaleX(1.0129)">Conjunto de regulación</span>
<div class="" style="position:absolute;left:66px;top:497px;width:9px;height:1px;background:repeating-linear-gradient(to right,#808080 0 1px,transparent 1px 2px)"></div>
<svg style="position:absolute;left:70px;top:482px;overflow:visible" width="1" height="1"><g transform="scale(0.064309)"><path d="M290 95 L322 50 H485" fill="none" stroke="#2f62a3" stroke-width="12" stroke-linejoin="round" /><path d="M268 100 L305 84 V116 Z" fill="#1c4a8c" stroke="#1c4a8c" stroke-width="0" stroke-linejoin="round" /><path d="M110 130 H485" fill="none" stroke="#2f62a3" stroke-width="15" stroke-linejoin="round" /><path d="M150 135 L175 210 M250 135 L228 210 M215 135 L195 200 M185 135 L205 200" fill="none" stroke="#2f62a3" stroke-width="11" stroke-linejoin="round" /><path d="M345 135 L365 205 M440 135 L420 205 M395 135 L380 195" fill="none" stroke="#2f62a3" stroke-width="11" stroke-linejoin="round" /><rect x="128" y="205" width="147" height="160" rx="24" fill="#fff" stroke="#2f62a3" stroke-width="15"/><rect x="140" y="232" width="125" height="53" rx="0" fill="#a9b4cd" stroke="none" stroke-width="0"/><path d="M110 290 H295" fill="none" stroke="#2f62a3" stroke-width="10" stroke-linejoin="round" /><path d="M320 220 V260" fill="none" stroke="#2f62a3" stroke-width="12" stroke-linejoin="round" /></g></svg><svg style="position:absolute;left:0;top:0;overflow:visible" width="1" height="1"><circle cx="97.0" cy="503.9" r="4.6" fill="#fff"/><path d="M100.85 497.80 C100.81 497.98 100.76 498.64 100.60 498.90 C100.44 499.16 100.17 499.28 99.90 499.35 C99.63 499.42 99.25 499.41 99.00 499.30 C98.75 499.19 98.55 498.97 98.40 498.70 C98.25 498.43 98.25 497.96 98.10 497.70 C97.95 497.44 97.78 497.25 97.50 497.15 C97.22 497.05 96.70 497.04 96.40 497.10 C96.10 497.16 95.87 497.28 95.70 497.50 C95.53 497.72 95.53 498.13 95.40 498.40 C95.27 498.67 95.10 498.95 94.90 499.10 C94.70 499.25 94.42 499.32 94.20 499.30 C93.98 499.28 93.77 499.18 93.60 499.00 C93.43 498.82 93.27 498.33 93.20 498.20" fill="none" stroke="#fff" stroke-width="2.6" stroke-linecap="round"/><path d="M92.55 501.00 C92.49 501.20 92.51 501.91 92.21 502.23 C91.91 502.55 91.05 502.58 90.76 502.90 C90.48 503.21 90.46 503.75 90.50 504.12 C90.54 504.49 90.69 504.86 90.99 505.12 C91.29 505.38 92.05 505.43 92.32 505.68 C92.59 505.93 92.76 506.36 92.59 506.64 C92.42 506.92 91.53 507.23 91.32 507.35" fill="none" stroke="#fff" stroke-width="2.6" stroke-linecap="round"/><path d="M100.85 497.80 L100.60 498.90 L99.90 499.35 L99.00 499.30 L98.40 498.70 L98.10 497.70 L97.50 497.15 L96.40 497.10 L95.70 497.50 L95.40 498.40 L94.90 499.10 L94.20 499.30 L93.60 499.00 L93.20 498.20" fill="none" stroke="#2f62a3" stroke-width="1.25" stroke-linecap="round" stroke-linejoin="round"/><path d="M93.20 498.20 C93.05 498.19 92.60 498.02 92.30 498.15 C92.00 498.28 91.48 498.68 91.40 499.00 C91.32 499.32 91.61 499.77 91.80 500.10 C91.99 500.43 92.42 500.85 92.55 501.00" fill="none" stroke="#2f62a3" stroke-opacity="0.45" stroke-width="1.1" stroke-linecap="round"/><path d="M92.55 501.00 C92.49 501.20 92.51 501.91 92.21 502.23 C91.91 502.55 91.05 502.58 90.76 502.90 C90.48 503.21 90.46 503.75 90.50 504.12 C90.54 504.49 90.69 504.86 90.99 505.12 C91.29 505.38 92.05 505.43 92.32 505.68 C92.59 505.93 92.76 506.36 92.59 506.64 C92.42 506.92 91.53 507.23 91.32 507.35" fill="none" stroke="#2f62a3" stroke-width="1.25" stroke-linecap="round"/><circle cx="97.0" cy="503.9" r="3.3" fill="#e4ebf6" stroke="#7494c6" stroke-width="1.0"/><path d="M98.76 504.63 L100.05 505.16 M97.73 505.66 L98.26 506.95 M96.27 505.66 L95.74 506.95 M95.24 504.63 L93.95 505.16 M95.24 503.17 L93.95 502.64 M96.27 502.14 L95.74 500.85 M97.73 502.14 L98.26 500.85 M98.76 503.17 L100.05 502.64 " stroke="#fff" stroke-width="0.7"/><circle cx="97.0" cy="503.9" r="1.8" fill="#eef2f9" stroke="#2f62a3" stroke-width="1.05"/><circle cx="97.0" cy="503.5" r="0.6" fill="#86a3cf"/></svg>
<span class="t " id="t18" style="left:106.91px;top:489px;color:#000;font-size:12px;transform:scaleX(0.9761)">Contadores</span>
<div class="" style="position:absolute;left:66px;top:523px;width:9px;height:1px;background:repeating-linear-gradient(to right,#808080 0 1px,transparent 1px 2px)"></div>
<svg style="position:absolute;left:70px;top:482px;overflow:visible" width="1" height="1"><g transform="scale(0.064309)"><path d="M295 525 L340 497 H465" fill="none" stroke="#2f62a3" stroke-width="10" stroke-linejoin="round" /><path d="M110 600 H485" fill="none" stroke="#2f62a3" stroke-width="10" stroke-linejoin="round" /><path d="M110 652 H165" fill="none" stroke="#9db6d8" stroke-width="18" stroke-linejoin="round" /><path d="M235 597 L295 520 L352 597 Z" fill="#c9d3e6" stroke="#2f62a3" stroke-width="10" stroke-linejoin="round" /><rect x="280" y="514" width="26" height="26" rx="0" fill="#1c4a8c" stroke="none" stroke-width="0"/><rect x="160" y="565" width="55" height="115" rx="12" fill="#c9d3e6" stroke="#2f62a3" stroke-width="10"/><rect x="380" y="565" width="55" height="77" rx="12" fill="#c9d3e6" stroke="#2f62a3" stroke-width="10"/><rect x="215" y="588" width="165" height="77" rx="0" fill="#ccd3e3" stroke="#2f62a3" stroke-width="8"/><rect x="222" y="594" width="151" height="65" rx="0" fill="#ccd3e3" stroke="none" stroke-width="0"/></g></svg><svg style="position:absolute;left:0;top:0;overflow:visible" width="1" height="1"><circle cx="97.0" cy="529.9" r="4.6" fill="#fff"/><path d="M100.85 523.80 C100.81 523.98 100.76 524.64 100.60 524.90 C100.44 525.16 100.17 525.28 99.90 525.35 C99.63 525.42 99.25 525.41 99.00 525.30 C98.75 525.19 98.55 524.97 98.40 524.70 C98.25 524.43 98.25 523.96 98.10 523.70 C97.95 523.44 97.78 523.25 97.50 523.15 C97.22 523.05 96.70 523.04 96.40 523.10 C96.10 523.16 95.87 523.28 95.70 523.50 C95.53 523.72 95.53 524.13 95.40 524.40 C95.27 524.67 95.10 524.95 94.90 525.10 C94.70 525.25 94.42 525.32 94.20 525.30 C93.98 525.28 93.77 525.18 93.60 525.00 C93.43 524.82 93.27 524.33 93.20 524.20" fill="none" stroke="#fff" stroke-width="2.6" stroke-linecap="round"/><path d="M92.55 527.00 C92.49 527.21 92.51 527.91 92.21 528.23 C91.91 528.55 91.05 528.59 90.76 528.90 C90.48 529.21 90.46 529.75 90.50 530.12 C90.54 530.49 90.69 530.86 90.99 531.12 C91.29 531.38 92.05 531.43 92.32 531.68 C92.59 531.93 92.76 532.36 92.59 532.64 C92.42 532.92 91.53 533.23 91.32 533.35" fill="none" stroke="#fff" stroke-width="2.6" stroke-linecap="round"/><path d="M100.85 523.80 L100.60 524.90 L99.90 525.35 L99.00 525.30 L98.40 524.70 L98.10 523.70 L97.50 523.15 L96.40 523.10 L95.70 523.50 L95.40 524.40 L94.90 525.10 L94.20 525.30 L93.60 525.00 L93.20 524.20" fill="none" stroke="#2f62a3" stroke-width="1.25" stroke-linecap="round" stroke-linejoin="round"/><path d="M93.20 524.20 C93.05 524.19 92.60 524.02 92.30 524.15 C92.00 524.28 91.48 524.67 91.40 525.00 C91.32 525.33 91.61 525.77 91.80 526.10 C91.99 526.43 92.42 526.85 92.55 527.00" fill="none" stroke="#2f62a3" stroke-opacity="0.45" stroke-width="1.1" stroke-linecap="round"/><path d="M92.55 527.00 C92.49 527.21 92.51 527.91 92.21 528.23 C91.91 528.55 91.05 528.59 90.76 528.90 C90.48 529.21 90.46 529.75 90.50 530.12 C90.54 530.49 90.69 530.86 90.99 531.12 C91.29 531.38 92.05 531.43 92.32 531.68 C92.59 531.93 92.76 532.36 92.59 532.64 C92.42 532.92 91.53 533.23 91.32 533.35" fill="none" stroke="#2f62a3" stroke-width="1.25" stroke-linecap="round"/><circle cx="97.0" cy="529.9" r="3.3" fill="#e4ebf6" stroke="#7494c6" stroke-width="1.0"/><path d="M98.76 530.63 L100.05 531.16 M97.73 531.66 L98.26 532.95 M96.27 531.66 L95.74 532.95 M95.24 530.63 L93.95 531.16 M95.24 529.17 L93.95 528.64 M96.27 528.14 L95.74 526.85 M97.73 528.14 L98.26 526.85 M98.76 529.17 L100.05 528.64 " stroke="#fff" stroke-width="0.7"/><circle cx="97.0" cy="529.9" r="1.8" fill="#eef2f9" stroke="#2f62a3" stroke-width="1.05"/><circle cx="97.0" cy="529.5" r="0.6" fill="#86a3cf"/></svg>
<span class="t " id="t19" style="left:107.0px;top:515px;color:#000;font-size:12px;transform:scaleX(0.9080)">Llaves</span>
<div class="" style="position:absolute;left:66px;top:549px;width:9px;height:1px;background:repeating-linear-gradient(to right,#808080 0 1px,transparent 1px 2px)"></div>
<svg style="position:absolute;left:70px;top:534px;overflow:visible" width="1" height="1"><g transform="scale(0.064309)"><path d="M205 95 C215 130 300 160 330 250 C345 300 320 350 280 365 C312 320 292 250 255 215 C250 250 237 270 226 282 C223 266 215 258 207 262 C188 292 175 328 196 366 C150 356 105 320 110 260 C115 215 170 190 190 150 C200 130 207 110 205 95 Z" fill="#1c4a8c" stroke="none" stroke-width="0" stroke-linejoin="round" /></g></svg><svg style="position:absolute;left:0;top:0;overflow:visible" width="1" height="1"><circle cx="97.0" cy="555.9" r="4.6" fill="#fff"/><path d="M100.85 549.80 C100.81 549.98 100.76 550.64 100.60 550.90 C100.44 551.16 100.17 551.28 99.90 551.35 C99.63 551.42 99.25 551.41 99.00 551.30 C98.75 551.19 98.55 550.97 98.40 550.70 C98.25 550.43 98.25 549.96 98.10 549.70 C97.95 549.44 97.78 549.25 97.50 549.15 C97.22 549.05 96.70 549.04 96.40 549.10 C96.10 549.16 95.87 549.28 95.70 549.50 C95.53 549.72 95.53 550.13 95.40 550.40 C95.27 550.67 95.10 550.95 94.90 551.10 C94.70 551.25 94.42 551.32 94.20 551.30 C93.98 551.28 93.77 551.18 93.60 551.00 C93.43 550.82 93.27 550.33 93.20 550.20" fill="none" stroke="#fff" stroke-width="2.6" stroke-linecap="round"/><path d="M92.55 553.00 C92.49 553.21 92.51 553.91 92.21 554.23 C91.91 554.55 91.05 554.59 90.76 554.90 C90.48 555.21 90.46 555.75 90.50 556.12 C90.54 556.49 90.69 556.86 90.99 557.12 C91.29 557.38 92.05 557.43 92.32 557.68 C92.59 557.93 92.76 558.36 92.59 558.64 C92.42 558.92 91.53 559.23 91.32 559.35" fill="none" stroke="#fff" stroke-width="2.6" stroke-linecap="round"/><path d="M100.85 549.80 L100.60 550.90 L99.90 551.35 L99.00 551.30 L98.40 550.70 L98.10 549.70 L97.50 549.15 L96.40 549.10 L95.70 549.50 L95.40 550.40 L94.90 551.10 L94.20 551.30 L93.60 551.00 L93.20 550.20" fill="none" stroke="#2f62a3" stroke-width="1.25" stroke-linecap="round" stroke-linejoin="round"/><path d="M93.20 550.20 C93.05 550.19 92.60 550.02 92.30 550.15 C92.00 550.28 91.48 550.67 91.40 551.00 C91.32 551.33 91.61 551.77 91.80 552.10 C91.99 552.43 92.42 552.85 92.55 553.00" fill="none" stroke="#2f62a3" stroke-opacity="0.45" stroke-width="1.1" stroke-linecap="round"/><path d="M92.55 553.00 C92.49 553.21 92.51 553.91 92.21 554.23 C91.91 554.55 91.05 554.59 90.76 554.90 C90.48 555.21 90.46 555.75 90.50 556.12 C90.54 556.49 90.69 556.86 90.99 557.12 C91.29 557.38 92.05 557.43 92.32 557.68 C92.59 557.93 92.76 558.36 92.59 558.64 C92.42 558.92 91.53 559.23 91.32 559.35" fill="none" stroke="#2f62a3" stroke-width="1.25" stroke-linecap="round"/><circle cx="97.0" cy="555.9" r="3.3" fill="#e4ebf6" stroke="#7494c6" stroke-width="1.0"/><path d="M98.76 556.63 L100.05 557.16 M97.73 557.66 L98.26 558.95 M96.27 557.66 L95.74 558.95 M95.24 556.63 L93.95 557.16 M95.24 555.17 L93.95 554.64 M96.27 554.14 L95.74 552.85 M97.73 554.14 L98.26 552.85 M98.76 555.17 L100.05 554.64 " stroke="#fff" stroke-width="0.7"/><circle cx="97.0" cy="555.9" r="1.8" fill="#eef2f9" stroke="#2f62a3" stroke-width="1.05"/><circle cx="97.0" cy="555.5" r="0.6" fill="#86a3cf"/></svg>
<span class="t " id="t20" style="left:106.91px;top:541px;color:#000;font-size:12px;transform:scaleX(0.9873)">Consumos</span>
<div class="" style="position:absolute;left:66px;top:575px;width:9px;height:1px;background:repeating-linear-gradient(to right,#808080 0 1px,transparent 1px 2px)"></div>
<svg style="position:absolute;left:70px;top:534px;overflow:visible" width="1" height="1"><g transform="scale(0.064309)"><defs><linearGradient id="tg3" x1="0" y1="0" x2="0" y2="1"><stop offset="0" stop-color="#aeb9d2"/><stop offset="1" stop-color="#cfd6e5"/></linearGradient></defs><rect x="115" y="580" width="360" height="80" rx="14" fill="url(#tg3)" stroke="#2f62a3" stroke-width="17"/></g></svg><svg style="position:absolute;left:0;top:0;overflow:visible" width="1" height="1"><circle cx="97.0" cy="581.9" r="4.6" fill="#fff"/><path d="M100.85 575.80 C100.81 575.98 100.76 576.64 100.60 576.90 C100.44 577.16 100.17 577.28 99.90 577.35 C99.63 577.42 99.25 577.41 99.00 577.30 C98.75 577.19 98.55 576.97 98.40 576.70 C98.25 576.43 98.25 575.96 98.10 575.70 C97.95 575.44 97.78 575.25 97.50 575.15 C97.22 575.05 96.70 575.04 96.40 575.10 C96.10 575.16 95.87 575.28 95.70 575.50 C95.53 575.72 95.53 576.13 95.40 576.40 C95.27 576.67 95.10 576.95 94.90 577.10 C94.70 577.25 94.42 577.32 94.20 577.30 C93.98 577.28 93.77 577.18 93.60 577.00 C93.43 576.82 93.27 576.33 93.20 576.20" fill="none" stroke="#fff" stroke-width="2.6" stroke-linecap="round"/><path d="M92.55 579.00 C92.49 579.21 92.51 579.91 92.21 580.23 C91.91 580.55 91.05 580.59 90.76 580.90 C90.48 581.21 90.46 581.75 90.50 582.12 C90.54 582.49 90.69 582.86 90.99 583.12 C91.29 583.38 92.05 583.43 92.32 583.68 C92.59 583.93 92.76 584.36 92.59 584.64 C92.42 584.92 91.53 585.23 91.32 585.35" fill="none" stroke="#fff" stroke-width="2.6" stroke-linecap="round"/><path d="M100.85 575.80 L100.60 576.90 L99.90 577.35 L99.00 577.30 L98.40 576.70 L98.10 575.70 L97.50 575.15 L96.40 575.10 L95.70 575.50 L95.40 576.40 L94.90 577.10 L94.20 577.30 L93.60 577.00 L93.20 576.20" fill="none" stroke="#2f62a3" stroke-width="1.25" stroke-linecap="round" stroke-linejoin="round"/><path d="M93.20 576.20 C93.05 576.19 92.60 576.02 92.30 576.15 C92.00 576.28 91.48 576.67 91.40 577.00 C91.32 577.33 91.61 577.77 91.80 578.10 C91.99 578.43 92.42 578.85 92.55 579.00" fill="none" stroke="#2f62a3" stroke-opacity="0.45" stroke-width="1.1" stroke-linecap="round"/><path d="M92.55 579.00 C92.49 579.21 92.51 579.91 92.21 580.23 C91.91 580.55 91.05 580.59 90.76 580.90 C90.48 581.21 90.46 581.75 90.50 582.12 C90.54 582.49 90.69 582.86 90.99 583.12 C91.29 583.38 92.05 583.43 92.32 583.68 C92.59 583.93 92.76 584.36 92.59 584.64 C92.42 584.92 91.53 585.23 91.32 585.35" fill="none" stroke="#2f62a3" stroke-width="1.25" stroke-linecap="round"/><circle cx="97.0" cy="581.9" r="3.3" fill="#e4ebf6" stroke="#7494c6" stroke-width="1.0"/><path d="M98.76 582.63 L100.05 583.16 M97.73 583.66 L98.26 584.95 M96.27 583.66 L95.74 584.95 M95.24 582.63 L93.95 583.16 M95.24 581.17 L93.95 580.64 M96.27 580.14 L95.74 578.85 M97.73 580.14 L98.26 578.85 M98.76 581.17 L100.05 580.64 " stroke="#fff" stroke-width="0.7"/><circle cx="97.0" cy="581.9" r="1.8" fill="#eef2f9" stroke="#2f62a3" stroke-width="1.05"/><circle cx="97.0" cy="581.5" r="0.6" fill="#86a3cf"/></svg>
<span class="t " id="t21" style="left:106.93px;top:567px;color:#000;font-size:12px;transform:scaleX(0.9104)">Tuberías</span>
<svg style="position:absolute;left:27px;top:103px" width="9" height="9" viewBox="0 0 9 9"><defs><linearGradient id="eg21" x1="0" y1="0" x2="0" y2="1"><stop offset="0" stop-color="#fff"/><stop offset="1" stop-color="#d6d6d6"/></linearGradient></defs><rect x="0.5" y="0.5" width="8" height="8" rx="1.2" fill="url(#eg21)" stroke="#8e8e8e"/><path d="M2 4.5H7" stroke="#3a52a6" stroke-width="1"/></svg>
<svg style="position:absolute;left:27px;top:207px" width="9" height="9" viewBox="0 0 9 9"><defs><linearGradient id="eg21" x1="0" y1="0" x2="0" y2="1"><stop offset="0" stop-color="#fff"/><stop offset="1" stop-color="#d6d6d6"/></linearGradient></defs><rect x="0.5" y="0.5" width="8" height="8" rx="1.2" fill="url(#eg21)" stroke="#8e8e8e"/><path d="M2 4.5H7" stroke="#3a52a6" stroke-width="1"/></svg>
<svg style="position:absolute;left:56px;top:233px" width="9" height="9" viewBox="0 0 9 9"><defs><linearGradient id="eg21" x1="0" y1="0" x2="0" y2="1"><stop offset="0" stop-color="#fff"/><stop offset="1" stop-color="#d6d6d6"/></linearGradient></defs><rect x="0.5" y="0.5" width="8" height="8" rx="1.2" fill="url(#eg21)" stroke="#8e8e8e"/><path d="M2 4.5H7" stroke="#3a52a6" stroke-width="1"/><path d="M4.5 2V7" stroke="#3a52a6" stroke-width="1"/></svg>
<svg style="position:absolute;left:56px;top:259px" width="9" height="9" viewBox="0 0 9 9"><defs><linearGradient id="eg21" x1="0" y1="0" x2="0" y2="1"><stop offset="0" stop-color="#fff"/><stop offset="1" stop-color="#d6d6d6"/></linearGradient></defs><rect x="0.5" y="0.5" width="8" height="8" rx="1.2" fill="url(#eg21)" stroke="#8e8e8e"/><path d="M2 4.5H7" stroke="#3a52a6" stroke-width="1"/><path d="M4.5 2V7" stroke="#3a52a6" stroke-width="1"/></svg>
<svg style="position:absolute;left:56px;top:285px" width="9" height="9" viewBox="0 0 9 9"><defs><linearGradient id="eg21" x1="0" y1="0" x2="0" y2="1"><stop offset="0" stop-color="#fff"/><stop offset="1" stop-color="#d6d6d6"/></linearGradient></defs><rect x="0.5" y="0.5" width="8" height="8" rx="1.2" fill="url(#eg21)" stroke="#8e8e8e"/><path d="M2 4.5H7" stroke="#3a52a6" stroke-width="1"/><path d="M4.5 2V7" stroke="#3a52a6" stroke-width="1"/></svg>
<svg style="position:absolute;left:27px;top:311px" width="9" height="9" viewBox="0 0 9 9"><defs><linearGradient id="eg21" x1="0" y1="0" x2="0" y2="1"><stop offset="0" stop-color="#fff"/><stop offset="1" stop-color="#d6d6d6"/></linearGradient></defs><rect x="0.5" y="0.5" width="8" height="8" rx="1.2" fill="url(#eg21)" stroke="#8e8e8e"/><path d="M2 4.5H7" stroke="#3a52a6" stroke-width="1"/></svg>
<svg style="position:absolute;left:56px;top:337px" width="9" height="9" viewBox="0 0 9 9"><defs><linearGradient id="eg21" x1="0" y1="0" x2="0" y2="1"><stop offset="0" stop-color="#fff"/><stop offset="1" stop-color="#d6d6d6"/></linearGradient></defs><rect x="0.5" y="0.5" width="8" height="8" rx="1.2" fill="url(#eg21)" stroke="#8e8e8e"/><path d="M2 4.5H7" stroke="#3a52a6" stroke-width="1"/><path d="M4.5 2V7" stroke="#3a52a6" stroke-width="1"/></svg>
<svg style="position:absolute;left:56px;top:363px" width="9" height="9" viewBox="0 0 9 9"><defs><linearGradient id="eg21" x1="0" y1="0" x2="0" y2="1"><stop offset="0" stop-color="#fff"/><stop offset="1" stop-color="#d6d6d6"/></linearGradient></defs><rect x="0.5" y="0.5" width="8" height="8" rx="1.2" fill="url(#eg21)" stroke="#8e8e8e"/><path d="M2 4.5H7" stroke="#3a52a6" stroke-width="1"/><path d="M4.5 2V7" stroke="#3a52a6" stroke-width="1"/></svg>
<svg style="position:absolute;left:56px;top:389px" width="9" height="9" viewBox="0 0 9 9"><defs><linearGradient id="eg21" x1="0" y1="0" x2="0" y2="1"><stop offset="0" stop-color="#fff"/><stop offset="1" stop-color="#d6d6d6"/></linearGradient></defs><rect x="0.5" y="0.5" width="8" height="8" rx="1.2" fill="url(#eg21)" stroke="#8e8e8e"/><path d="M2 4.5H7" stroke="#3a52a6" stroke-width="1"/><path d="M4.5 2V7" stroke="#3a52a6" stroke-width="1"/></svg>
<svg style="position:absolute;left:56px;top:415px" width="9" height="9" viewBox="0 0 9 9"><defs><linearGradient id="eg21" x1="0" y1="0" x2="0" y2="1"><stop offset="0" stop-color="#fff"/><stop offset="1" stop-color="#d6d6d6"/></linearGradient></defs><rect x="0.5" y="0.5" width="8" height="8" rx="1.2" fill="url(#eg21)" stroke="#8e8e8e"/><path d="M2 4.5H7" stroke="#3a52a6" stroke-width="1"/><path d="M4.5 2V7" stroke="#3a52a6" stroke-width="1"/></svg>
<svg style="position:absolute;left:56px;top:441px" width="9" height="9" viewBox="0 0 9 9"><defs><linearGradient id="eg21" x1="0" y1="0" x2="0" y2="1"><stop offset="0" stop-color="#fff"/><stop offset="1" stop-color="#d6d6d6"/></linearGradient></defs><rect x="0.5" y="0.5" width="8" height="8" rx="1.2" fill="url(#eg21)" stroke="#8e8e8e"/><path d="M2 4.5H7" stroke="#3a52a6" stroke-width="1"/></svg>
<svg style="position:absolute;left:56px;top:493px" width="9" height="9" viewBox="0 0 9 9"><defs><linearGradient id="eg21" x1="0" y1="0" x2="0" y2="1"><stop offset="0" stop-color="#fff"/><stop offset="1" stop-color="#d6d6d6"/></linearGradient></defs><rect x="0.5" y="0.5" width="8" height="8" rx="1.2" fill="url(#eg21)" stroke="#8e8e8e"/><path d="M2 4.5H7" stroke="#3a52a6" stroke-width="1"/><path d="M4.5 2V7" stroke="#3a52a6" stroke-width="1"/></svg>
<svg style="position:absolute;left:56px;top:519px" width="9" height="9" viewBox="0 0 9 9"><defs><linearGradient id="eg21" x1="0" y1="0" x2="0" y2="1"><stop offset="0" stop-color="#fff"/><stop offset="1" stop-color="#d6d6d6"/></linearGradient></defs><rect x="0.5" y="0.5" width="8" height="8" rx="1.2" fill="url(#eg21)" stroke="#8e8e8e"/><path d="M2 4.5H7" stroke="#3a52a6" stroke-width="1"/><path d="M4.5 2V7" stroke="#3a52a6" stroke-width="1"/></svg>
<svg style="position:absolute;left:56px;top:545px" width="9" height="9" viewBox="0 0 9 9"><defs><linearGradient id="eg21" x1="0" y1="0" x2="0" y2="1"><stop offset="0" stop-color="#fff"/><stop offset="1" stop-color="#d6d6d6"/></linearGradient></defs><rect x="0.5" y="0.5" width="8" height="8" rx="1.2" fill="url(#eg21)" stroke="#8e8e8e"/><path d="M2 4.5H7" stroke="#3a52a6" stroke-width="1"/><path d="M4.5 2V7" stroke="#3a52a6" stroke-width="1"/></svg>
<svg style="position:absolute;left:56px;top:571px" width="9" height="9" viewBox="0 0 9 9"><defs><linearGradient id="eg21" x1="0" y1="0" x2="0" y2="1"><stop offset="0" stop-color="#fff"/><stop offset="1" stop-color="#d6d6d6"/></linearGradient></defs><rect x="0.5" y="0.5" width="8" height="8" rx="1.2" fill="url(#eg21)" stroke="#8e8e8e"/><path d="M2 4.5H7" stroke="#3a52a6" stroke-width="1"/><path d="M4.5 2V7" stroke="#3a52a6" stroke-width="1"/></svg>
<div class="" style="position:absolute;left:404px;top:402px;width:4px;height:4px;background:#f6f6f6"></div>
<div class="" style="position:absolute;left:405px;top:403px;width:2px;height:2px;background:#a2a2a2"></div>
<div class="" style="position:absolute;left:404px;top:406px;width:4px;height:4px;background:#f6f6f6"></div>
<div class="" style="position:absolute;left:405px;top:407px;width:2px;height:2px;background:#a2a2a2"></div>
<div class="" style="position:absolute;left:404px;top:410px;width:4px;height:4px;background:#f6f6f6"></div>
<div class="" style="position:absolute;left:405px;top:411px;width:2px;height:2px;background:#a2a2a2"></div>
<div class="" style="position:absolute;left:404px;top:414px;width:4px;height:4px;background:#f6f6f6"></div>
<div class="" style="position:absolute;left:405px;top:415px;width:2px;height:2px;background:#a2a2a2"></div>
<div class="" style="position:absolute;left:410px;top:65px;width:655px;height:47px;background:#fff;border:1px solid #c6c6c6;box-sizing:border-box"></div>
<span class="t " id="t22" style="left:421.99px;top:82px;color:#000;font-size:12px;transform:scaleX(0.9447)">Referencia</span>
<div class="" style="position:absolute;left:483px;top:77px;width:570px;height:23px;background:#fff;border:1px solid #7a7a7a;box-sizing:border-box"></div>
<span class="t " id="t23" style="left:488.91px;top:81px;color:#000;font-size:12px;transform:scaleX(1.0129)">Conjunto de regulación</span>
<div class="" style="position:absolute;left:410px;top:120px;width:655px;height:140px;background:#fff;border:1px solid #c6c6c6;box-sizing:border-box"></div>
<div class="" style="position:absolute;left:411px;top:121px;width:653px;height:18px;background:#d9d9d9"></div>
<span class="t " id="t24" style="left:416.62px;top:123px;color:#000;font-size:12px;transform:scaleX(0.9488)">Características generales</span>
<span class="t " id="t25" style="left:422.26px;top:152px;color:#000;font-size:12px;transform:scaleX(0.9915)">Descripción</span>
<div class="" style="position:absolute;left:490px;top:150px;width:563px;height:61px;background:#fff;border:1px solid #7a7a7a;box-sizing:border-box"></div>
<div class="" style="position:absolute;left:1035px;top:152px;width:16px;height:57px;background:#f0f0f0"></div>
<svg style="position:absolute;left:1035px;top:152px" width="16" height="57" viewBox="0 0 16 57"><path d="M4.3 11.3 L7.7 7.6 L11.1 11.3" fill="none" stroke="#bfbfbf" stroke-width="2"/><path d="M4.3 46.2 L7.7 50 L11.1 46.2" fill="none" stroke="#bfbfbf" stroke-width="2"/></svg>
<span class="t " id="t26" style="left:422.27px;top:230px;color:#000;font-size:12px;transform:scaleX(0.9570)">Presión de salida</span>
<div class="" style="position:absolute;left:516px;top:225px;width:63px;height:23px;background:#fff;border:1px solid #7a7a7a;box-sizing:border-box"></div>
<span class="t " id="t27" style="left:546.52px;top:230px;color:#000;font-size:12px;transform:scaleX(0.8743)">50.40</span>
<span class="t " id="t28" style="left:586.22px;top:230px;color:#000;font-size:12px;transform:scaleX(1.0089)">mbar</span>
<div class="" style="position:absolute;left:410px;top:268px;width:655px;height:105px;background:#fff;border:1px solid #c6c6c6;box-sizing:border-box"></div>
<div class="" style="position:absolute;left:411px;top:269px;width:653px;height:18px;background:#d9d9d9"></div>
<span class="t " id="t29" style="left:416.7px;top:271px;color:#000;font-size:12px;transform:scaleX(0.9730)">Representación gráfica</span>
<svg style="position:absolute;left:422px;top:304px" width="13" height="13" viewBox="0 0 13 13"><rect x="0.5" y="0.5" width="12" height="12" fill="#fff" stroke="#333"/><path d="M2.6 6.6 L5.2 9.2 L10.4 3.6" fill="none" stroke="#222" stroke-width="1.1"/></svg>
<span class="t " id="t30" style="left:438.48px;top:304px;color:#000;font-size:12px;transform:scaleX(1.0004)">Símbolo</span>
<svg style="position:absolute;left:422px;top:339px" width="13" height="13" viewBox="0 0 13 13"><rect x="0.5" y="0.5" width="12" height="12" fill="#fff" stroke="#333"/><path d="M2.6 6.6 L5.2 9.2 L10.4 3.6" fill="none" stroke="#222" stroke-width="1.1"/></svg>
<span class="t " id="t31" style="left:438.54px;top:339px;color:#000;font-size:12px;transform:scaleX(0.9883)">Dimensiones</span>
<div class="" style="position:absolute;left:1028px;top:299px;width:24px;height:24px;background:#e1e1e1;border:1px solid #adadad;box-sizing:border-box"></div>
<svg style="position:absolute;left:1028px;top:299px" width="24" height="24" viewBox="0 0 24 24"><g transform="translate(12.2,12.3) rotate(-42)"><path d="M-5.4 -2.1 H7.1 V2.1 H-5.4 L-9.7 0 Z" fill="#27589f"/><path d="M-4.8 -0.7 H6.8 M-4.8 0.75 H6.8" stroke="#a9bfe0" stroke-width="0.55" stroke-dasharray="0.75 0.85"/><rect x="7.5" y="-2.1" width="2.3" height="4.2" rx="1.1" fill="#1d4d95"/><ellipse cx="-6.1" cy="0.1" rx="0.95" ry="0.75" fill="#f4f6fa"/></g></svg>
<div class="" style="position:absolute;left:785px;top:338px;width:63px;height:23px;background:#fff;border:1px solid #7a7a7a;box-sizing:border-box"></div>
<span class="t " id="t32" style="left:821.08px;top:343px;color:#000;font-size:12px;transform:scaleX(0.8867)">0.60</span>
<span class="t " id="t33" style="left:853.47px;top:343px;color:#000;font-size:12px;transform:scaleX(1.1548)">m</span>
<div class="" style="position:absolute;left:879px;top:338px;width:63px;height:23px;background:#fff;border:1px solid #7a7a7a;box-sizing:border-box"></div>
<span class="t " id="t34" style="left:915.08px;top:343px;color:#000;font-size:12px;transform:scaleX(0.8867)">0.60</span>
<span class="t " id="t35" style="left:947.47px;top:343px;color:#000;font-size:12px;transform:scaleX(1.1548)">m</span>
<div class="" style="position:absolute;left:973px;top:338px;width:63px;height:23px;background:#fff;border:1px solid #7a7a7a;box-sizing:border-box"></div>
<span class="t " id="t36" style="left:1009.08px;top:343px;color:#000;font-size:12px;transform:scaleX(0.8867)">0.60</span>
<span class="t " id="t37" style="left:1041.47px;top:343px;color:#000;font-size:12px;transform:scaleX(1.1548)">m</span>
<div class="" style="position:absolute;left:1073px;top:65px;width:1px;height:690px;background:#c3c3c3"></div>
<div class="" style="position:absolute;left:1074px;top:65px;width:1px;height:690px;background:#fff"></div>
<div class="" style="position:absolute;left:1115px;top:39px;width:1px;height:716px;background:#c3c3c3"></div>
<div class="" style="position:absolute;left:1116px;top:39px;width:1px;height:716px;background:#fff"></div>
<svg style="position:absolute;left:1087px;top:68px" width="18" height="18" viewBox="0 0 18 18"><path d="M1.5 2.2 Q1.5 1.6 2.1 1.6 H6.3 Q6.9 1.6 6.9 2.2 V4.2 H15 Q15.6 4.2 15.6 4.8 V13.9 Q15.6 14.5 15 14.5 H2.1 Q1.5 14.5 1.5 13.9 Z" fill="#ffd84e" stroke="#f7b93e" stroke-width="0.8"/><path d="M15.9 8.7 C12.8 8.6 10.2 10.4 9.2 12.9 L7.7 13.5 L10.7 16.1 L14.4 15 L12.8 13.8 C13.4 11.9 14.4 10.8 15.9 10.5 Z" fill="#2fa35e" stroke="#f0f0f0" stroke-width="0.4"/></svg>
<svg style="position:absolute;left:1087px;top:102px" width="18" height="18" viewBox="0 0 18 18"><path d="M1.5 2.2 Q1.5 1.6 2.1 1.6 H6.3 Q6.9 1.6 6.9 2.2 V4.2 H15 Q15.6 4.2 15.6 4.8 V13.9 Q15.6 14.5 15 14.5 H2.1 Q1.5 14.5 1.5 13.9 Z" fill="#ffd84e" stroke="#f7b93e" stroke-width="0.8"/><path d="M8.2 16.8 C10.9 16.4 13.1 15 13.9 13.1 L15.6 13.5 L13.1 8.7 L9.8 11.5 L11.4 12.1 C10.9 13.9 9.8 15.3 8.2 15.9 Z" fill="#d4152c" stroke="#f0f0f0" stroke-width="0.3"/></svg>
<svg style="position:absolute;left:1129px;top:45px" width="16" height="11" viewBox="0 0 16 11"><rect x="-1" y="-1" width="18" height="13" fill="#f8fafa"/><rect x="0" y="0" width="16" height="11" fill="#f40000"/><rect x="1" y="1" width="14" height="9" fill="#ff4b4b"/><rect x="0" y="3" width="16" height="5" fill="#fbf300"/><rect x="1" y="3.6" width="14" height="3.8" fill="#efe32e"/><circle cx="5.2" cy="5.6" r="1.5" fill="#e8502e"/><circle cx="5.4" cy="5.3" r="0.6" fill="#f8efe4"/><path d="M3.6 7.2 H6.8" stroke="#9fb08a" stroke-width="0.7"/></svg>
<svg style="position:absolute;left:1129px;top:79px" width="16" height="11" viewBox="0 0 16 11"><rect x="-1" y="-1" width="18" height="13" fill="#f8fafa"/><rect x="0" y="0" width="16" height="11" fill="#f40000"/><rect x="7" y="1" width="8" height="9" fill="#ff3c3c"/><rect x="0" y="0" width="6" height="11" fill="#063c0c"/><rect x="1" y="1" width="5" height="9" fill="#4f9a48"/><circle cx="6" cy="5.4" r="2.6" fill="#e9c63a" stroke="#d9922a" stroke-width="0.5"/><circle cx="6" cy="5.4" r="1.35" fill="#f4f8ff" stroke="#e63a3a" stroke-width="0.6"/></svg>
<div class="" style="position:absolute;left:1125px;top:98px;width:24px;height:1px;background:#c0c0c0"></div>
<div class="" style="position:absolute;left:1125px;top:99px;width:24px;height:1px;background:#fafafa"></div>
<svg style="position:absolute;left:1129px;top:103px" width="18" height="18" viewBox="0 0 18 18"><path d="M1.5 2.2 Q1.5 1.6 2.1 1.6 H6.3 Q6.9 1.6 6.9 2.2 V4.2 H15 Q15.6 4.2 15.6 4.8 V13.9 Q15.6 14.5 15 14.5 H2.1 Q1.5 14.5 1.5 13.9 Z" fill="#ffd84e" stroke="#f7b93e" stroke-width="0.8"/><path d="M11.1 7.9 L15.3 11.3 V16.9 H6.9 V11.3 Z" fill="#46536a" stroke="#eef0f3" stroke-width="0.6"/><path d="M11.3 9.6 L13.6 11.9 H12.2 V13 H10.4 V11.9 H9 Z" fill="#fff"/><rect x="8.4" y="13.9" width="2" height="2.2" fill="#fff"/><rect x="12.2" y="13.9" width="2" height="2.2" fill="#fff"/></svg>
<svg style="position:absolute;left:1129px;top:137px" width="18" height="18" viewBox="0 0 18 18"><path d="M1.5 2.2 Q1.5 1.6 2.1 1.6 H6.3 Q6.9 1.6 6.9 2.2 V4.2 H15 Q15.6 4.2 15.6 4.8 V13.9 Q15.6 14.5 15 14.5 H2.1 Q1.5 14.5 1.5 13.9 Z" fill="#ffd84e" stroke="#f7b93e" stroke-width="0.8"/><path d="M8.2 16.8 C10.9 16.4 13.1 15 13.9 13.1 L15.6 13.5 L13.1 8.7 L9.8 11.5 L11.4 12.1 C10.9 13.9 9.8 15.3 8.2 15.9 Z" fill="#d4152c" stroke="#f0f0f0" stroke-width="0.3"/></svg>
<div class="" style="position:absolute;left:12px;top:772px;width:73px;height:25px;background:#e1e1e1;border:2px solid #0078d7;box-sizing:border-box"></div>
<span class="t " id="t38" style="left:28.2px;top:778px;color:#000;font-size:12px;transform:scaleX(0.9789)">Aceptar</span>
<div class="" style="position:absolute;left:1082px;top:772px;width:68px;height:25px;background:#e1e1e1;border:1px solid #adadad;box-sizing:border-box"></div>
<span class="t " id="t39" style="left:1092.83px;top:778px;color:#000;font-size:12px;transform:scaleX(0.9490)">Cancelar</span>
<div class="" style="position:absolute;left:539px;top:379px;width:345px;height:399px;background:#185fa9"></div>
<div class="" style="position:absolute;left:539px;top:379px;width:345px;height:1px;background:#0c3e80"></div>
<div class="" style="position:absolute;left:539px;top:379px;width:1px;height:399px;background:#0c3e80"></div>
<div class="" style="position:absolute;left:883px;top:379px;width:1px;height:399px;background:#0c3e80"></div>
<div class="" style="position:absolute;left:539px;top:777px;width:345px;height:1px;background:#0c3e80"></div>
<div class="" style="position:absolute;left:544px;top:410px;width:335px;height:363px;background:#f0f0f0"></div>
<span class="t " id="t40" style="left:665.55px;top:390px;color:#fff;font-size:12px;transform:scaleX(0.9909)">Símbolo</span>
<svg style="position:absolute;left:849px;top:391px" width="12" height="12" viewBox="0 0 12 12"><path d="M1.2 1.2 L10.8 10.8 M10.8 1.2 L1.2 10.8" stroke="#fff" stroke-width="1.5" fill="none"/></svg>
<div class="" style="position:absolute;left:544px;top:733px;width:335px;height:40px;background:#e8e8e8"></div>
<div class="" style="position:absolute;left:544px;top:733px;width:335px;height:1px;background:#d2d2d2"></div>
<div class="" style="position:absolute;left:552px;top:418px;width:319px;height:307px;background:#fff;border:1px solid #c6c6c6;box-sizing:border-box"></div>
<div class="" style="position:absolute;left:561px;top:427px;width:301px;height:289px;background:#fff;border:1px solid #c6c6c6;box-sizing:border-box"></div>
<div class="" style="position:absolute;left:573px;top:439px;width:277px;height:25px;background:#fff;border:1px solid #707070;box-sizing:border-box"></div>
<div class="" style="position:absolute;left:576px;top:442px;width:254px;height:19px;background:#fff;border:1px solid #d0d0d0;box-sizing:border-box"></div>
<span class="t " id="t41" style="left:578.98px;top:445px;color:#000;font-size:12px;transform:scaleX(0.9853)">Regulación</span>
<svg style="position:absolute;left:835px;top:447px" width="12" height="9" viewBox="0 0 12 9"><path d="M2.1 2.7 L6 6.7 L9.9 2.7" fill="none" stroke="#4a4a4a" stroke-width="1.15"/></svg>
<div class="" style="position:absolute;left:570px;top:475px;width:283px;height:202px;background:#f5f5f5;border:1px solid #c6c6c6;box-sizing:border-box"></div>
<svg style="position:absolute;left:580px;top:520px" width="264" height="110" viewBox="0 0 264 110"><rect x="4" y="4" width="255" height="102" fill="none" stroke="#000" stroke-width="2" shape-rendering="crispEdges"/><path d="M4 4 L259 55.5 L4 106" fill="none" stroke="#000" stroke-width="2" shape-rendering="crispEdges"/></svg>
<svg style="position:absolute;left:573px;top:689px" width="13" height="13" viewBox="0 0 13 13"><rect x="0.5" y="0.5" width="12" height="12" fill="#fff" stroke="#333"/></svg>
<span class="t " id="t42" style="left:588.98px;top:689px;color:#000;font-size:12px;transform:scaleX(0.9832)">Dibujar los símbolos personalizados con su color</span>
<div class="" style="position:absolute;left:551px;top:741px;width:73px;height:25px;background:#e1e1e1;border:2px solid #0078d7;box-sizing:border-box"></div>
<span class="t " id="t43" style="left:567.2px;top:747px;color:#000;font-size:12px;transform:scaleX(0.9789)">Aceptar</span>
<div class="" style="position:absolute;left:804px;top:741px;width:68px;height:25px;background:#e1e1e1;border:1px solid #adadad;box-sizing:border-box"></div>
<span class="t " id="t44" style="left:814.83px;top:747px;color:#000;font-size:12px;transform:scaleX(0.9490)">Cancelar</span>
</body></html>
